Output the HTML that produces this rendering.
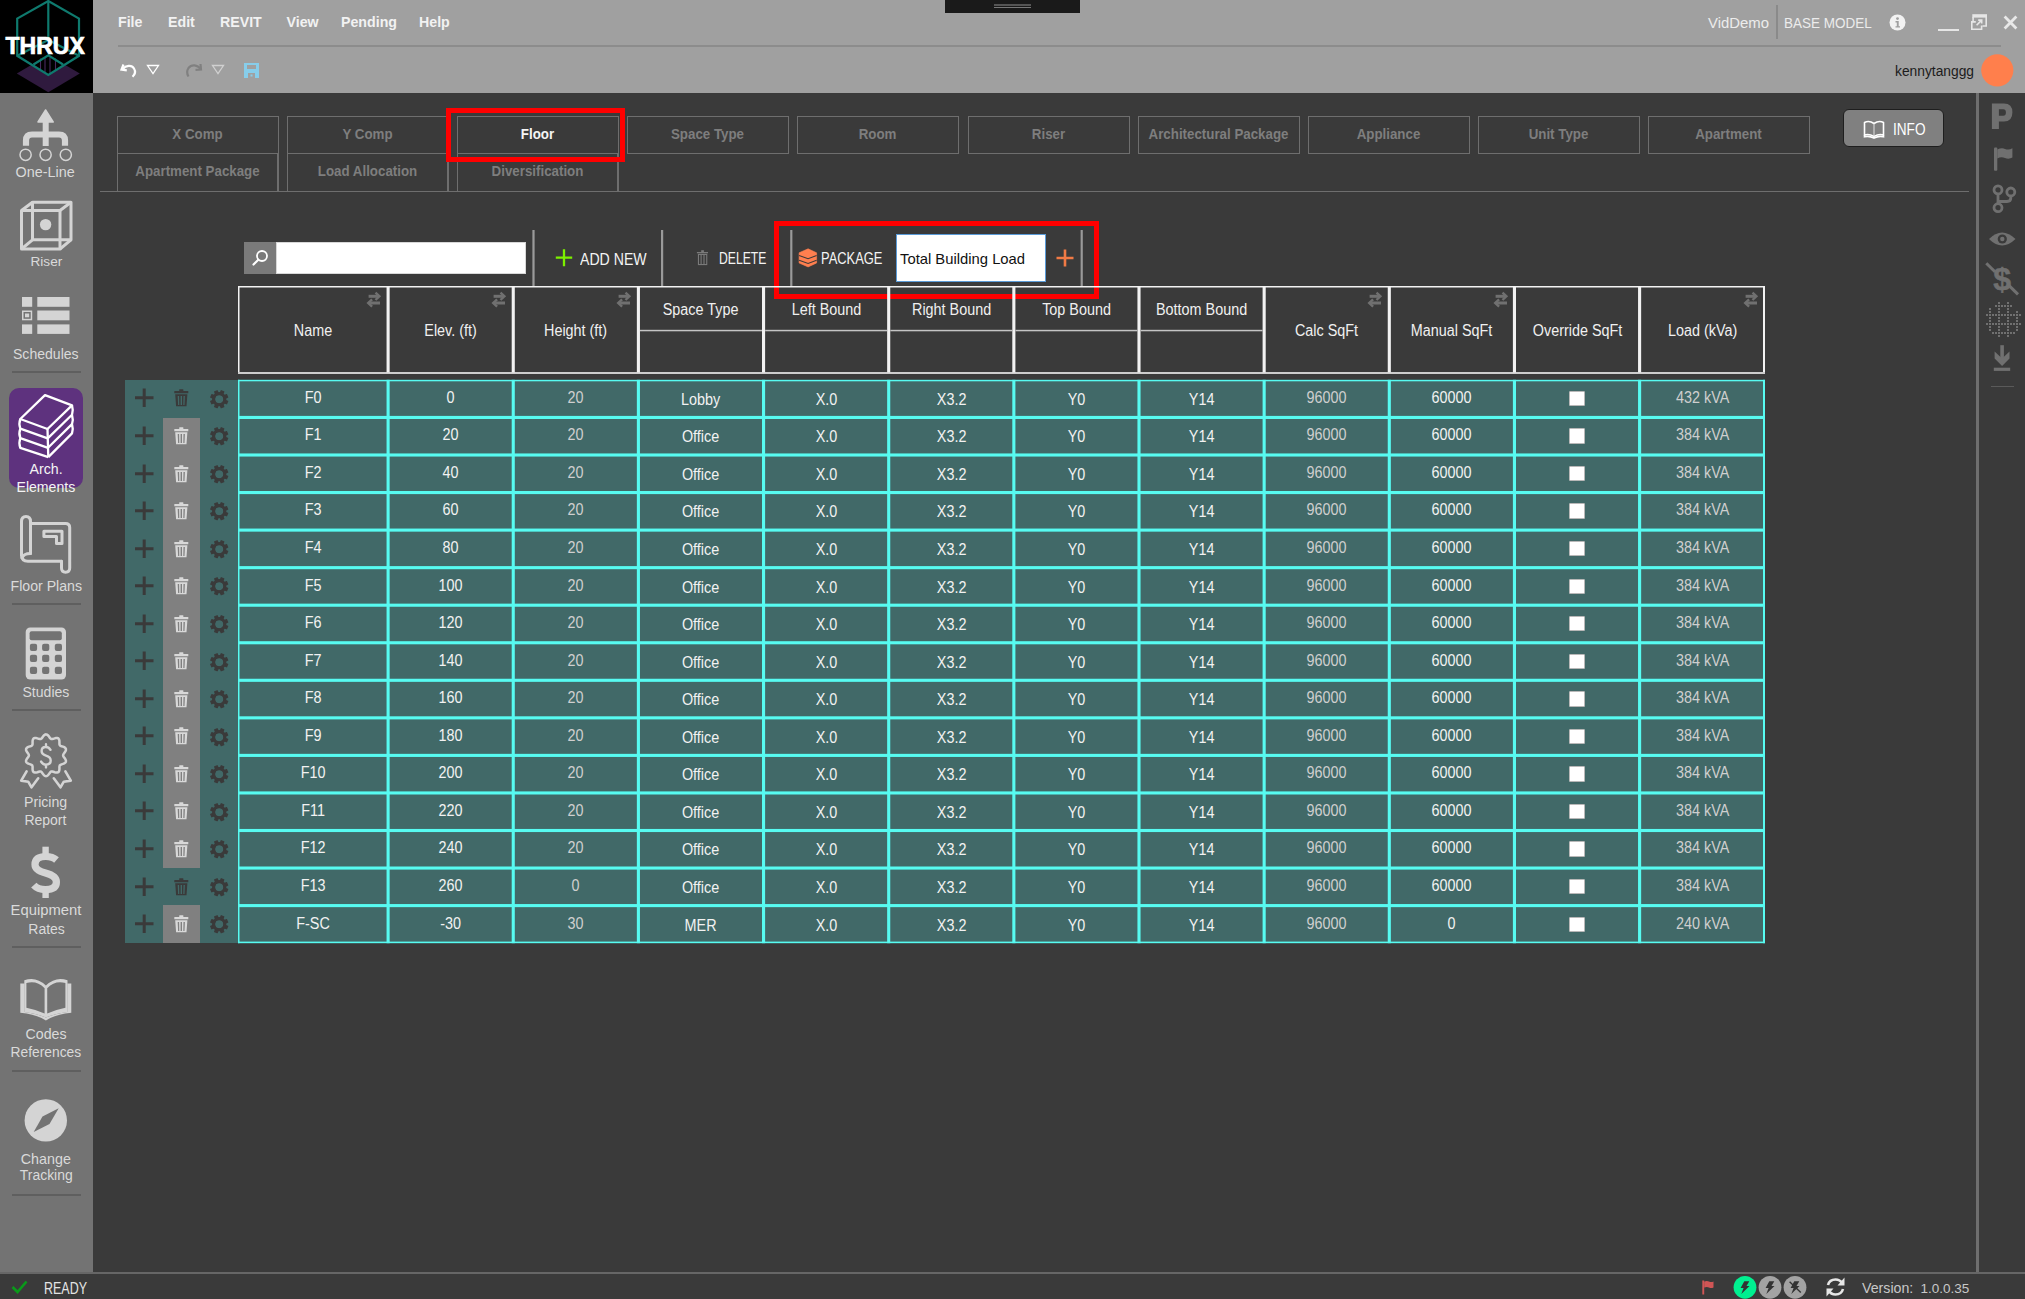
<!DOCTYPE html>
<html><head><meta charset="utf-8"><title>THRUX</title>
<style>
html,body{margin:0;padding:0;}
body{width:2025px;height:1299px;position:relative;overflow:hidden;background:#3a3a3a;font-family:"Liberation Sans",sans-serif;}
body>div,body>svg{position:absolute;}
</style></head><body>
<div style="left:93px;top:0px;width:1932px;height:93px;background:#a0a0a0;"></div>
<div style="left:0px;top:0px;width:93px;height:93px;background:#000;"></div>
<div style="left:0px;top:93px;width:93px;height:1179px;background:#737373;"></div>
<div style="left:0px;top:1272px;width:2025px;height:2px;background:#666666;"></div>
<div style="left:1976px;top:93px;width:2.5px;height:1179px;background:#6e6e6e;"></div>
<svg style="left:0px;top:0px;" width="93" height="93" viewBox="0 0 93 93"><polygon points="16.8,73.4 48.3,55 79.8,73.4 48.3,92.3" fill="#2f1a3e"/><polygon points="33.5,64.5 48.3,55.3 63,64.5 48.3,75" fill="#000"/><g stroke="#4a2a60" stroke-width="1.1"><line x1="40.5" y1="58.5" x2="40.5" y2="70"/><line x1="45" y1="57.5" x2="45" y2="73"/><line x1="50" y1="57.5" x2="50" y2="73"/><line x1="55.5" y1="58.5" x2="55.5" y2="70"/></g><g fill="none" stroke="#0f7a6e" stroke-width="2.2" stroke-linejoin="miter"><polygon points="48.3,1 79,18.6 79,55.8 48.3,75 17.2,55.8 17.2,18.6"/><polyline points="48.3,1 48.3,40"/><polyline points="17.2,55.8 48.3,40 79,55.8"/><polyline points="33.5,64.5 48.3,55.3 63,64.5"/></g></svg>
<div style="left:5.5px;top:34.93px;font-size:23.0px;line-height:23.0px;color:#ffffff;white-space:nowrap;font-weight:bold;-webkit-text-stroke:0.7px #fff;">THRUX</div>
<div style="left:118px;top:15.18px;font-size:14.2px;line-height:14.2px;color:#f2f2f2;white-space:nowrap;font-weight:bold;">File</div>
<div style="left:168px;top:15.18px;font-size:14.2px;line-height:14.2px;color:#f2f2f2;white-space:nowrap;font-weight:bold;">Edit</div>
<div style="left:220px;top:15.18px;font-size:14.2px;line-height:14.2px;color:#f2f2f2;white-space:nowrap;font-weight:bold;">REVIT</div>
<div style="left:286.5px;top:15.18px;font-size:14.2px;line-height:14.2px;color:#f2f2f2;white-space:nowrap;font-weight:bold;">View</div>
<div style="left:341px;top:15.18px;font-size:14.2px;line-height:14.2px;color:#f2f2f2;white-space:nowrap;font-weight:bold;">Pending</div>
<div style="left:419px;top:15.18px;font-size:14.2px;line-height:14.2px;color:#f2f2f2;white-space:nowrap;font-weight:bold;">Help</div>
<div style="left:118px;top:45px;width:1883px;height:2px;background:#8c8c8c;"></div>
<div style="left:945px;top:0px;width:135px;height:13px;background:#1a1a1a;"></div>
<div style="left:994px;top:4px;width:37px;height:2px;background:#555;"></div>
<div style="left:994px;top:7px;width:37px;height:1px;background:#777;"></div>
<svg style="left:118px;top:60px;" width="22" height="20" viewBox="0 0 22 20"><path d="M5.5,4.5 L3.5,9.5 L8.8,10.3" fill="none" stroke="#fff" stroke-width="2.2" stroke-linejoin="miter"/><path d="M4.5,9.2 C8,5.5 13.5,4.5 16,8.5 C17.8,11.5 17,14.5 14.5,16.8" fill="none" stroke="#fff" stroke-width="2.2"/></svg>
<svg style="left:146px;top:64px;" width="14" height="11" viewBox="0 0 14 11"><polygon points="1.5,1.5 12.5,1.5 7,9.5" fill="none" stroke="#fff" stroke-width="1.3"/></svg>
<svg style="left:184px;top:60px;" width="20" height="20" viewBox="0 0 20 20"><path d="M16.5,4 L17,9.5 L11.5,9.8" fill="none" stroke="#808080" stroke-width="2.2"/><path d="M16.5,9 C13.5,4.5 7.5,4 4.5,8 C2.5,11 3,14 4.5,16.5" fill="none" stroke="#808080" stroke-width="2.2"/></svg>
<svg style="left:211px;top:64px;" width="14" height="11" viewBox="0 0 14 11"><polygon points="1.5,1.5 12.5,1.5 7,9.5" fill="none" stroke="#d0d0d0" stroke-width="1.3"/></svg>
<svg style="left:243px;top:62px;" width="17" height="17" viewBox="0 0 17 17"><path d="M1,1 H16 V16 H1 Z M4,3 V7 H13 V3 Z M5,11 V16 H12 V11 Z" fill="#87cdea" fill-rule="evenodd"/><rect x="7.5" y="12.5" width="2" height="2" fill="#87cdea"/></svg>
<div style="left:1708px;top:15.98px;font-size:14.9px;line-height:14.9px;color:#ececec;white-space:nowrap;">VidDemo</div>
<div style="left:1776px;top:5px;width:1.5px;height:34px;background:#8a8a8a;"></div>
<div style="left:1784.3px;top:15.08px;font-size:15.5px;line-height:15.5px;color:#ececec;white-space:nowrap;transform:scaleX(0.8705);transform-origin:0 0;">BASE MODEL</div>
<svg style="left:1889px;top:14px;" width="17" height="17" viewBox="0 0 17 17"><circle cx="8.5" cy="8.5" r="8" fill="#f2f2f2"/><circle cx="8.5" cy="4.6" r="1.4" fill="#a0a0a0"/><path d="M6.5,7 H9.7 V12.2 H11 V13.6 H6.5 V12.2 H7.8 V8.4 H6.5 Z" fill="#a0a0a0"/></svg>
<div style="left:1938px;top:29px;width:20.5px;height:2.2px;background:#e6e6e6;"></div>
<svg style="left:1970px;top:13px;" width="19" height="18" viewBox="0 0 19 18"><g fill="none" stroke="#e6e6e6" stroke-width="1.6"><path d="M16.2,4 V13 H12.6 M3.1,4 V8.4 M5.8,8.9 H1.8 V16.2 H11.6 V12.6 M6.6,12.2 L11.4,7.4 M8.2,7.1 H11.7 V10.6"/></g><rect x="2.3" y="1.2" width="14.7" height="3.4" fill="#e6e6e6"/></svg>
<svg style="left:2002px;top:14px;" width="17" height="17" viewBox="0 0 17 17"><path d="M2.6,2.6 L14.4,14.4 M14.4,2.6 L2.6,14.4" stroke="#e8e8e8" stroke-width="2.8"/></svg>
<div style="left:1895px;top:65.12px;font-size:13.8px;line-height:13.8px;color:#1c1c1c;white-space:nowrap;">kennytanggg</div>
<svg style="left:1981px;top:54px;" width="33" height="33" viewBox="0 0 33 33"><circle cx="16.3" cy="16.3" r="16.1" fill="#ff7f4c"/></svg>
<svg style="left:15px;top:105px;" width="62" height="60" viewBox="0 0 62 60"><path d="M23,17 L30.6,5 L38.2,17 Z" fill="#d4d4d4" stroke="#d4d4d4" stroke-width="1.5" stroke-linejoin="round"/><rect x="27.7" y="15" width="6" height="26" fill="#d4d4d4"/><path d="M11,40.8 V35.5 Q11,29.5 17,29.5 H44 Q50,29.5 50,35.5 V40.8" fill="none" stroke="#d4d4d4" stroke-width="6.2"/><g fill="none" stroke="#d4d4d4" stroke-width="1.5"><circle cx="10.6" cy="49.8" r="5.6"/><circle cx="30.6" cy="49.8" r="5.6"/><circle cx="50.8" cy="49.8" r="5.6"/></g></svg>
<div style="left:15.5px;top:165.41px;font-size:14.4px;line-height:14.4px;color:#dadada;white-space:nowrap;">One-Line</div>
<svg style="left:15px;top:195px;" width="62" height="60" viewBox="0 0 62 60"><g fill="none" stroke="#d4d4d4" stroke-width="3" stroke-linejoin="round"><rect x="6.5" y="15.5" width="38.5" height="38.5"/><rect x="17.5" y="7.2" width="38.5" height="37.6"/><line x1="6.5" y1="15.5" x2="17.5" y2="7.2"/><line x1="45" y1="15.5" x2="56" y2="7.2"/><line x1="6.5" y1="54" x2="17.5" y2="44.8"/><line x1="45" y1="54" x2="56" y2="44.8"/></g><circle cx="30.6" cy="29.6" r="5.7" fill="#d4d4d4"/></svg>
<div style="left:30.5px;top:255.08px;font-size:13.6px;line-height:13.6px;color:#dadada;white-space:nowrap;">Riser</div>
<svg style="left:15px;top:290px;" width="62" height="50" viewBox="0 0 62 50"><g fill="#d4d4d4"><rect x="7" y="7" width="10.2" height="9.8"/><rect x="7" y="34.4" width="10.2" height="9.5"/><rect x="22.3" y="7" width="32.2" height="9.8"/><rect x="22.3" y="20.5" width="32.2" height="9.8"/><rect x="22.3" y="34.4" width="32.2" height="9.5"/></g><rect x="7.75" y="21.25" width="8.7" height="8.3" fill="none" stroke="#d4d4d4" stroke-width="1.5"/><rect x="10" y="23.5" width="4.2" height="3.8" fill="#d4d4d4"/></svg>
<div style="left:13px;top:346.90px;font-size:14.05px;line-height:14.05px;color:#dadada;white-space:nowrap;">Schedules</div>
<div style="left:11.5px;top:371px;width:69px;height:1.5px;background:#5f5f5f;"></div>
<div style="left:9px;top:388px;width:74px;height:100px;background:#5e327e;border-radius:10px;"></div>
<svg style="left:15px;top:390px;" width="62" height="72" viewBox="0 0 62 72"><g fill="none" stroke="#ffffff" stroke-width="2.3" stroke-linejoin="round"><path d="M5.3,29 L30,5.2 L57,15.4 L32.5,39 Z"/><path d="M5.3,29 Q3.5,34 5.3,38.6 L32.7,48.4 M5.3,38.6 Q3.5,43.5 5.3,48.2 L33,57.8 M5.3,48.2 Q3.5,53 5.3,57.8 L33.3,67.1"/><path d="M32.5,39 L33.3,67.1"/><path d="M57,15.4 Q58.5,20 57,24.8 L32.7,48.4 M57,24.8 Q58.5,29.5 57,34.1 L33,57.8 M57,34.1 Q58.5,39 57,43.4 L33.3,67.1"/></g></svg>
<div style="left:29.5px;top:461.98px;font-size:14.2px;line-height:14.2px;color:#f4f4f4;white-space:nowrap;">Arch.</div>
<div style="left:16.5px;top:479.86px;font-size:14.1px;line-height:14.1px;color:#f4f4f4;white-space:nowrap;">Elements</div>
<svg style="left:15px;top:510px;" width="62" height="70" viewBox="0 0 62 70"><g fill="none" stroke="#d4d4d4" stroke-width="3" stroke-linejoin="round" stroke-linecap="round"><path d="M6.5,45 V11.5 Q6.5,6.5 11,6.5 Q15.5,6.5 15.5,11.5 V43.5"/><path d="M6.5,45 Q6.5,51.2 13,51.2 H46.5"/><path d="M15.5,43.5 Q8.5,43.5 7,48"/><path d="M15.5,13.5 H50.5 Q54.7,13.5 54.7,17.5 V58 Q54.7,62.2 50.6,62.2 Q46.5,62.2 46.5,58 V51.2"/><path d="M28.9,21.2 H47 V33.5 H41.5 V26.5 H28.9 Z"/></g></svg>
<div style="left:10.5px;top:579.22px;font-size:14.15px;line-height:14.15px;color:#dadada;white-space:nowrap;">Floor Plans</div>
<div style="left:11.5px;top:603px;width:69px;height:1.5px;background:#5f5f5f;"></div>
<svg style="left:15px;top:620px;" width="62" height="65" viewBox="0 0 62 65"><rect x="10.7" y="7.4" width="40.3" height="52.2" rx="4.5" fill="#d4d4d4"/><rect x="14.6" y="11.3" width="32.2" height="9" rx="2" fill="#737373"/><rect x="14.9" y="23.8" width="7.2" height="7.2" rx="2" fill="#737373"/><rect x="27.1" y="23.8" width="7.2" height="7.2" rx="2" fill="#737373"/><rect x="39.8" y="23.8" width="7.2" height="7.2" rx="2" fill="#737373"/><rect x="14.9" y="34.8" width="7.2" height="7.2" rx="2" fill="#737373"/><rect x="27.1" y="34.8" width="7.2" height="7.2" rx="2" fill="#737373"/><rect x="39.8" y="34.8" width="7.2" height="7.2" rx="2" fill="#737373"/><rect x="14.9" y="46.7" width="7.2" height="7.2" rx="2" fill="#737373"/><rect x="27.1" y="46.7" width="7.2" height="7.2" rx="2" fill="#737373"/><rect x="39.8" y="46.7" width="7.2" height="7.2" rx="2" fill="#737373"/></svg>
<div style="left:22.5px;top:684.60px;font-size:14.05px;line-height:14.05px;color:#dadada;white-space:nowrap;">Studies</div>
<div style="left:11.5px;top:709px;width:69px;height:1.5px;background:#5f5f5f;"></div>
<svg style="left:15px;top:720px;" width="62" height="75" viewBox="0 0 62 75"><polygon points="31.00,14.40 32.08,14.68 33.09,15.46 33.97,16.53 34.75,17.64 35.49,18.54 36.28,19.04 37.22,19.10 38.34,18.81 39.63,18.37 40.97,18.02 42.24,17.99 43.28,18.39 43.99,19.26 44.35,20.47 44.44,21.86 44.41,23.22 44.49,24.38 44.83,25.25 45.55,25.85 46.63,26.27 47.93,26.67 49.23,27.19 50.27,27.90 50.88,28.84 50.94,29.96 50.51,31.15 49.77,32.33 48.95,33.41 48.33,34.39 48.10,35.30 48.33,36.21 48.95,37.19 49.77,38.27 50.51,39.45 50.94,40.64 50.88,41.76 50.27,42.70 49.23,43.41 47.93,43.93 46.63,44.32 45.55,44.75 44.83,45.35 44.49,46.22 44.41,47.38 44.44,48.74 44.35,50.13 43.99,51.34 43.28,52.21 42.24,52.61 40.97,52.58 39.63,52.23 38.34,51.79 37.22,51.50 36.28,51.56 35.49,52.06 34.75,52.96 33.97,54.07 33.09,55.14 32.08,55.92 31.00,56.20 29.92,55.92 28.91,55.14 28.03,54.07 27.25,52.96 26.51,52.06 25.72,51.56 24.78,51.50 23.66,51.79 22.37,52.23 21.03,52.58 19.76,52.61 18.72,52.21 18.01,51.34 17.65,50.13 17.56,48.74 17.59,47.38 17.51,46.22 17.17,45.35 16.45,44.75 15.37,44.33 14.07,43.93 12.77,43.41 11.73,42.70 11.12,41.76 11.06,40.64 11.49,39.45 12.23,38.27 13.05,37.19 13.67,36.21 13.90,35.30 13.67,34.39 13.05,33.41 12.23,32.33 11.49,31.15 11.06,29.96 11.12,28.84 11.73,27.90 12.77,27.19 14.07,26.67 15.37,26.27 16.45,25.85 17.17,25.25 17.51,24.38 17.59,23.22 17.56,21.86 17.65,20.47 18.01,19.26 18.72,18.39 19.76,17.99 21.03,18.02 22.37,18.37 23.66,18.81 24.78,19.10 25.72,19.04 26.51,18.54 27.25,17.64 28.03,16.53 28.91,15.46 29.92,14.68" fill="none" stroke="#d4d4d4" stroke-width="2.5"/><path d="M11.6,51.3 L6.2,60.6 L13.2,61.7 L16.5,67.3 L23.2,58.3 M50.4,51.3 L55.8,60.6 L48.8,61.7 L45.5,67.3 L38.8,58.3" fill="none" stroke="#d4d4d4" stroke-width="2.6" stroke-linejoin="round" stroke-linecap="round"/><path d="M35.5,29.8 Q33.8,27 30.8,27 Q26.6,27 26.6,31 Q26.6,34.3 31,35.6 Q35.7,37 35.7,40.6 Q35.7,44.6 31,44.6 Q27.8,44.6 26.1,41.6 M31,24.2 V27 M31,44.6 V47.4" fill="none" stroke="#d4d4d4" stroke-width="2.4" stroke-linecap="round"/></svg>
<div style="left:24px;top:794.82px;font-size:14.15px;line-height:14.15px;color:#dadada;white-space:nowrap;">Pricing</div>
<div style="left:24.4px;top:812.65px;font-size:14.0px;line-height:14.0px;color:#dadada;white-space:nowrap;">Report</div>
<svg style="left:25px;top:840px;" width="42" height="64" viewBox="0 0 42 64"><path d="M31.5,20 Q27.5,16.5 20.8,16.5 Q10,16.5 10,24.5 Q10,30.3 20.5,33 Q31.4,35.8 31.4,42 Q31.4,49.6 20.5,49.6 Q12.8,49.6 8.8,45.2" fill="none" stroke="#d4d4d4" stroke-width="7.2"/><rect x="17.4" y="6.7" width="6.4" height="8" fill="#d4d4d4"/><rect x="17.4" y="51" width="6.4" height="7" fill="#d4d4d4"/></svg>
<div style="left:10.6px;top:903.17px;font-size:14.8px;line-height:14.8px;color:#dadada;white-space:nowrap;">Equipment</div>
<div style="left:28.3px;top:921.65px;font-size:14.0px;line-height:14.0px;color:#dadada;white-space:nowrap;">Rates</div>
<div style="left:11.5px;top:946px;width:69px;height:1.5px;background:#5f5f5f;"></div>
<svg style="left:15px;top:972px;" width="62" height="52" viewBox="0 0 62 52"><path d="M5.3,11.5 H9.5 V40 Q22,41.5 30.9,45.5 Q39.8,41.5 52.3,40 V11.5 H56.3 V40.8 Q40,42.5 30.9,48.4 Q21.8,42.5 5.3,40.8 Z" fill="#d4d4d4"/><path d="M9.3,8.3 Q21,4 30.9,13.5 Q40.8,4 52.5,8.3 V40.2 Q39.8,41.5 30.9,45.5 Q22,41.5 9.3,40.2 Z M11.4,11.1 Q21.5,8 29.6,16.2 V41.6 Q21,37.5 11.4,35.7 Z M50.4,11.1 Q40.3,8 32.2,16.2 V41.6 Q40.8,37.5 50.4,35.7 Z" fill="#d4d4d4" fill-rule="evenodd"/></svg>
<div style="left:25.6px;top:1027.48px;font-size:14.2px;line-height:14.2px;color:#dadada;white-space:nowrap;">Codes</div>
<div style="left:10.6px;top:1045.72px;font-size:13.8px;line-height:13.8px;color:#dadada;white-space:nowrap;">References</div>
<div style="left:11.5px;top:1070px;width:69px;height:1.5px;background:#5f5f5f;"></div>
<svg style="left:15px;top:1090px;" width="62" height="60" viewBox="0 0 62 60"><circle cx="30.8" cy="30.4" r="21.2" fill="#d4d4d4"/><path d="M18.7,42 L27.5,26.5 L43.7,18.3 L34.5,34 Z" fill="#737373"/></svg>
<div style="left:20.8px;top:1151.59px;font-size:14.3px;line-height:14.3px;color:#dadada;white-space:nowrap;">Change</div>
<div style="left:19.8px;top:1169.19px;font-size:13.95px;line-height:13.95px;color:#dadada;white-space:nowrap;">Tracking</div>
<div style="left:11.5px;top:1194px;width:69px;height:1.5px;background:#5f5f5f;"></div>
<svg style="left:1988px;top:100px;" width="28" height="32" viewBox="0 0 28 32"><path d="M3.9,3.6 H16 Q24.4,3.6 24.4,12.5 Q24.4,21.5 16,21.5 H10.9 V28.9 H3.9 Z M10.9,9.3 V15.8 H15.3 Q17.9,15.8 17.9,12.5 Q17.9,9.3 15.3,9.3 Z" fill="#707070" fill-rule="evenodd"/></svg>
<svg style="left:1990px;top:145px;" width="26" height="28" viewBox="0 0 26 28"><rect x="4" y="2.4" width="3.3" height="23.4" rx="1" fill="#707070"/><path d="M7.3,4.5 Q12,2.5 15,4 Q19,5.5 22.4,3.2 V12.5 Q19,14.5 15,13 Q11,11.5 7.3,13.5 Z" fill="#707070"/></svg>
<svg style="left:1988px;top:183px;" width="30" height="32" viewBox="0 0 30 32"><g fill="none" stroke="#707070" stroke-width="2.8"><circle cx="10" cy="6.9" r="4"/><circle cx="22.8" cy="9" r="4"/><circle cx="10" cy="24.7" r="4"/><path d="M10,10.9 V20.7 M22.8,13 V15 Q22.8,18.5 19,18.5 H10"/></g></svg>
<svg style="left:1988px;top:229px;" width="29" height="20" viewBox="0 0 29 20"><path d="M1,10 Q14,-3 27.5,10 Q14,23 1,10 Z" fill="#707070"/><circle cx="14.3" cy="10" r="4.6" fill="#3a3a3a"/><circle cx="14.3" cy="10" r="2.2" fill="#707070"/></svg>
<svg style="left:1984px;top:260px;" width="38" height="38" viewBox="0 0 38 38"><line x1="2.3" y1="3.3" x2="34" y2="34.4" stroke="#707070" stroke-width="3"/><line x1="11" y1="11.8" x2="25" y2="25.5" stroke="#3a3a3a" stroke-width="6"/><text x="18.1" y="29.6" font-family="Liberation Sans" font-weight="bold" font-size="32" fill="#707070" stroke="#707070" stroke-width="0.5" text-anchor="middle">$</text></svg>
<svg style="left:1985px;top:301px;" width="37" height="37" viewBox="0 0 37 37"><g fill="#707070"><rect x="13.0" y="1.0" width="2" height="2"/><rect x="22.0" y="1.0" width="2" height="2"/><rect x="10.0" y="4.0" width="2" height="2"/><rect x="13.0" y="4.0" width="2" height="2"/><rect x="16.0" y="4.0" width="2" height="2"/><rect x="19.0" y="4.0" width="2" height="2"/><rect x="22.0" y="4.0" width="2" height="2"/><rect x="25.0" y="4.0" width="2" height="2"/><rect x="4.0" y="7.0" width="2" height="2"/><rect x="13.0" y="7.0" width="2" height="2"/><rect x="22.0" y="7.0" width="2" height="2"/><rect x="4.0" y="10.0" width="2" height="2"/><rect x="13.0" y="10.0" width="2" height="2"/><rect x="22.0" y="10.0" width="2" height="2"/><rect x="31.0" y="10.0" width="2" height="2"/><rect x="1.0" y="13.0" width="2" height="2"/><rect x="4.0" y="13.0" width="2" height="2"/><rect x="7.0" y="13.0" width="2" height="2"/><rect x="10.0" y="13.0" width="2" height="2"/><rect x="13.0" y="13.0" width="2" height="2"/><rect x="16.0" y="13.0" width="2" height="2"/><rect x="19.0" y="13.0" width="2" height="2"/><rect x="22.0" y="13.0" width="2" height="2"/><rect x="25.0" y="13.0" width="2" height="2"/><rect x="28.0" y="13.0" width="2" height="2"/><rect x="31.0" y="13.0" width="2" height="2"/><rect x="34.0" y="13.0" width="2" height="2"/><rect x="4.0" y="16.0" width="2" height="2"/><rect x="13.0" y="16.0" width="2" height="2"/><rect x="22.0" y="16.0" width="2" height="2"/><rect x="31.0" y="16.0" width="2" height="2"/><rect x="4.0" y="19.0" width="2" height="2"/><rect x="13.0" y="19.0" width="2" height="2"/><rect x="22.0" y="19.0" width="2" height="2"/><rect x="31.0" y="19.0" width="2" height="2"/><rect x="1.0" y="22.0" width="2" height="2"/><rect x="4.0" y="22.0" width="2" height="2"/><rect x="7.0" y="22.0" width="2" height="2"/><rect x="10.0" y="22.0" width="2" height="2"/><rect x="13.0" y="22.0" width="2" height="2"/><rect x="16.0" y="22.0" width="2" height="2"/><rect x="19.0" y="22.0" width="2" height="2"/><rect x="22.0" y="22.0" width="2" height="2"/><rect x="25.0" y="22.0" width="2" height="2"/><rect x="28.0" y="22.0" width="2" height="2"/><rect x="31.0" y="22.0" width="2" height="2"/><rect x="34.0" y="22.0" width="2" height="2"/><rect x="4.0" y="25.0" width="2" height="2"/><rect x="13.0" y="25.0" width="2" height="2"/><rect x="22.0" y="25.0" width="2" height="2"/><rect x="31.0" y="25.0" width="2" height="2"/><rect x="4.0" y="28.0" width="2" height="2"/><rect x="13.0" y="28.0" width="2" height="2"/><rect x="22.0" y="28.0" width="2" height="2"/><rect x="31.0" y="28.0" width="2" height="2"/><rect x="7.0" y="31.0" width="2" height="2"/><rect x="10.0" y="31.0" width="2" height="2"/><rect x="13.0" y="31.0" width="2" height="2"/><rect x="16.0" y="31.0" width="2" height="2"/><rect x="19.0" y="31.0" width="2" height="2"/><rect x="22.0" y="31.0" width="2" height="2"/><rect x="25.0" y="31.0" width="2" height="2"/><rect x="28.0" y="31.0" width="2" height="2"/><rect x="13.0" y="34.0" width="2" height="2"/><rect x="22.0" y="34.0" width="2" height="2"/></g></svg>
<svg style="left:1992px;top:344px;" width="20" height="30" viewBox="0 0 20 30"><rect x="8.3" y="1.2" width="3.6" height="14" fill="#707070"/><path d="M2.6,7.5 L10.1,14.5 L17.5,7.5 V14.5 L10.1,22 L2.6,14.5 Z" fill="#707070"/><rect x="1.8" y="23.7" width="16.4" height="3.2" fill="#707070"/></svg>
<div style="left:1991px;top:385.5px;width:22.5px;height:1.5px;background:#5a5a5a;"></div>
<div style="left:116.5px;top:116px;width:162px;height:38px;border:1.5px solid #6e6e6e;box-sizing:border-box;"></div>
<div style="left:117px;top:127.27px;font-size:14.8px;line-height:14.8px;color:#7e7e7e;white-space:nowrap;width:161px;text-align:center;font-weight:bold;transform:scaleX(0.9);">X Comp</div>
<div style="left:286.5px;top:116px;width:162px;height:38px;border:1.5px solid #6e6e6e;box-sizing:border-box;"></div>
<div style="left:287px;top:127.27px;font-size:14.8px;line-height:14.8px;color:#7e7e7e;white-space:nowrap;width:161px;text-align:center;font-weight:bold;transform:scaleX(0.9);">Y Comp</div>
<div style="left:456.5px;top:116px;width:162px;height:38px;border:1.5px solid #6e6e6e;box-sizing:border-box;"></div>
<div style="left:457px;top:127.27px;font-size:14.8px;line-height:14.8px;color:#f4f4f4;white-space:nowrap;width:161px;text-align:center;font-weight:bold;transform:scaleX(0.9);">Floor</div>
<div style="left:626.5px;top:116px;width:162px;height:38px;border:1.5px solid #6e6e6e;box-sizing:border-box;"></div>
<div style="left:627px;top:127.27px;font-size:14.8px;line-height:14.8px;color:#7e7e7e;white-space:nowrap;width:161px;text-align:center;font-weight:bold;transform:scaleX(0.9);">Space Type</div>
<div style="left:796.5px;top:116px;width:162px;height:38px;border:1.5px solid #6e6e6e;box-sizing:border-box;"></div>
<div style="left:797px;top:127.27px;font-size:14.8px;line-height:14.8px;color:#7e7e7e;white-space:nowrap;width:161px;text-align:center;font-weight:bold;transform:scaleX(0.9);">Room</div>
<div style="left:967.5px;top:116px;width:162px;height:38px;border:1.5px solid #6e6e6e;box-sizing:border-box;"></div>
<div style="left:968px;top:127.27px;font-size:14.8px;line-height:14.8px;color:#7e7e7e;white-space:nowrap;width:161px;text-align:center;font-weight:bold;transform:scaleX(0.9);">Riser</div>
<div style="left:1137.5px;top:116px;width:162px;height:38px;border:1.5px solid #6e6e6e;box-sizing:border-box;"></div>
<div style="left:1138px;top:127.27px;font-size:14.8px;line-height:14.8px;color:#7e7e7e;white-space:nowrap;width:161px;text-align:center;font-weight:bold;transform:scaleX(0.9);">Architectural Package</div>
<div style="left:1307.5px;top:116px;width:162px;height:38px;border:1.5px solid #6e6e6e;box-sizing:border-box;"></div>
<div style="left:1308px;top:127.27px;font-size:14.8px;line-height:14.8px;color:#7e7e7e;white-space:nowrap;width:161px;text-align:center;font-weight:bold;transform:scaleX(0.9);">Appliance</div>
<div style="left:1477.5px;top:116px;width:162px;height:38px;border:1.5px solid #6e6e6e;box-sizing:border-box;"></div>
<div style="left:1478px;top:127.27px;font-size:14.8px;line-height:14.8px;color:#7e7e7e;white-space:nowrap;width:161px;text-align:center;font-weight:bold;transform:scaleX(0.9);">Unit Type</div>
<div style="left:1647.5px;top:116px;width:162px;height:38px;border:1.5px solid #6e6e6e;box-sizing:border-box;"></div>
<div style="left:1648px;top:127.27px;font-size:14.8px;line-height:14.8px;color:#7e7e7e;white-space:nowrap;width:161px;text-align:center;font-weight:bold;transform:scaleX(0.9);">Apartment</div>
<div style="left:116.5px;top:153px;width:1.5px;height:39px;background:#6e6e6e;"></div>
<div style="left:277px;top:153px;width:1.5px;height:39px;background:#6e6e6e;"></div>
<div style="left:117px;top:164.27px;font-size:14.8px;line-height:14.8px;color:#7e7e7e;white-space:nowrap;width:161px;text-align:center;font-weight:bold;transform:scaleX(0.9);">Apartment Package</div>
<div style="left:286.5px;top:153px;width:1.5px;height:39px;background:#6e6e6e;"></div>
<div style="left:447px;top:153px;width:1.5px;height:39px;background:#6e6e6e;"></div>
<div style="left:287px;top:164.27px;font-size:14.8px;line-height:14.8px;color:#7e7e7e;white-space:nowrap;width:161px;text-align:center;font-weight:bold;transform:scaleX(0.9);">Load Allocation</div>
<div style="left:456.5px;top:153px;width:1.5px;height:39px;background:#6e6e6e;"></div>
<div style="left:617px;top:153px;width:1.5px;height:39px;background:#6e6e6e;"></div>
<div style="left:457px;top:164.27px;font-size:14.8px;line-height:14.8px;color:#7e7e7e;white-space:nowrap;width:161px;text-align:center;font-weight:bold;transform:scaleX(0.9);">Diversification</div>
<div style="left:100px;top:190.8px;width:1869px;height:1.4px;background:#6e6e6e;"></div>
<div style="left:1843px;top:109px;width:100.5px;height:38px;background:#808080;border:1px solid #1e1e1e;border-radius:6px;box-sizing:border-box;"></div>
<svg style="left:1862px;top:119px;" width="24" height="21" viewBox="0 0 24 21"><path d="M2.5,3.5 Q7,1 12,4.5 Q17,1 21.5,3.5 V16 Q17,14.5 12,17.5 Q7,14.5 2.5,16 Z" fill="none" stroke="#fff" stroke-width="1.6" stroke-linejoin="round"/><path d="M12,4.5 V17.5" stroke="#e0e0e0" stroke-width="1"/><path d="M2.5,16 V17.8 Q7,16.5 12,19 Q17,16.5 21.5,17.8 V16" fill="none" stroke="#fff" stroke-width="1.6"/></svg>
<div style="left:1893.2px;top:122.45px;font-size:16px;line-height:16px;color:#ffffff;white-space:nowrap;transform:scaleX(0.8499);transform-origin:0 0;">INFO</div>
<div style="left:244px;top:242px;width:32px;height:31.5px;background:#7a7a7a;"></div>
<svg style="left:244px;top:242px;" width="32" height="32" viewBox="0 0 32 32"><circle cx="18" cy="14" r="5" fill="none" stroke="#fff" stroke-width="1.8"/><line x1="14.3" y1="17.7" x2="9.5" y2="22.5" stroke="#fff" stroke-width="2.2" stroke-linecap="round"/></svg>
<div style="left:276px;top:242px;width:250px;height:31.5px;background:#ffffff;border:1px solid #d8d8d8;box-sizing:border-box;"></div>
<svg style="left:520px;top:225px;" width="580" height="65" viewBox="0 0 580 65"><rect x="12.399999999999977" y="5" width="2.2" height="57" fill="#9a9a9a"/><rect x="141" y="5" width="2.2" height="57" fill="#9a9a9a"/><rect x="270.20000000000005" y="5" width="2.2" height="57" fill="#9a9a9a"/><rect x="560.5999999999999" y="5" width="2.2" height="57" fill="#9a9a9a"/></svg>
<svg style="left:553px;top:247px;" width="22" height="22" viewBox="0 0 22 22"><path d="M11,2.2 V19.2 M2.8,10.7 H19.2" stroke="#7cf000" stroke-width="2.3"/></svg>
<div style="left:579.8px;top:251.65px;font-size:16px;line-height:16px;color:#f4f4f4;white-space:nowrap;transform:scaleX(0.8823);transform-origin:0 0;">ADD NEW</div>
<svg style="left:694px;top:248px;" width="16" height="20" viewBox="0 0 16 20"><g fill="#7a7a7a"><rect x="7.2" y="2.2" width="2.7" height="1.9"/><rect x="2.9" y="4" width="11.1" height="1.3"/></g><g fill="none" stroke="#7a7a7a" stroke-width="1.1"><rect x="4.45" y="6.45" width="8.3" height="10.1"/><path d="M7.1,7 V16 M10,7 V16"/></g></svg>
<div style="left:718.8px;top:251.05px;font-size:16px;line-height:16px;color:#f4f4f4;white-space:nowrap;transform:scaleX(0.7616);transform-origin:0 0;">DELETE</div>
<svg style="left:797px;top:247px;" width="22" height="22" viewBox="0 0 22 22"><path d="M11.1,1.8 L19.6,5.8 V16 L11.1,19.9 L2.1,16 V5.8 Z" fill="#ff7f4f" stroke="#ff7f4f" stroke-width="0.6" stroke-linejoin="round"/><path d="M2.1,8.6 L11.1,11.7 L19.6,8.6 M2.1,13.3 L11.1,16.4 L19.6,13.3" fill="none" stroke="#3a3a3a" stroke-width="1.1"/></svg>
<div style="left:821.3px;top:251.05px;font-size:16px;line-height:16px;color:#f4f4f4;white-space:nowrap;transform:scaleX(0.8062);transform-origin:0 0;">PACKAGE</div>
<div style="left:895.5px;top:233.5px;width:150.5px;height:48.5px;background:#ffffff;border:1px solid #5a9bd8;box-sizing:border-box;"></div>
<div style="left:900px;top:252.17px;font-size:14.8px;line-height:14.8px;color:#111111;white-space:nowrap;">Total Building Load</div>
<svg style="left:1055px;top:248px;" width="20" height="20" viewBox="0 0 20 20"><path d="M10,1.5 V18.5 M1.5,10 H18.5" stroke="#f07a45" stroke-width="2.6"/></svg>
<div style="left:774px;top:221px;width:325px;height:78px;border:5.3px solid #ff0000;box-sizing:border-box;"></div>
<div style="left:446px;top:108.4px;width:179px;height:54px;border:5.2px solid #ff0000;box-sizing:border-box;"></div>
<svg style="left:0px;top:0px;" width="1800" height="400" viewBox="0 0 1800 400"><rect x="238" y="286" width="1527" height="1.5" fill="#f2f2f2"/><rect x="238" y="286" width="1.5" height="88" fill="#f2f2f2"/><rect x="1763" y="286" width="2" height="88" fill="#f2f2f2"/><rect x="238" y="372" width="1527" height="2" fill="#cdcdcd"/><rect x="386.55" y="286" width="3.1" height="86.5" fill="#f2f2f2"/><rect x="511.70" y="286" width="3.1" height="86.5" fill="#f2f2f2"/><rect x="636.85" y="286" width="3.1" height="86.5" fill="#f2f2f2"/><rect x="762.00" y="286" width="3.1" height="86.5" fill="#f2f2f2"/><rect x="887.15" y="286" width="3.1" height="86.5" fill="#f2f2f2"/><rect x="1012.30" y="286" width="3.1" height="86.5" fill="#f2f2f2"/><rect x="1137.45" y="286" width="3.1" height="86.5" fill="#f2f2f2"/><rect x="1262.60" y="286" width="3.1" height="86.5" fill="#f2f2f2"/><rect x="1387.75" y="286" width="3.1" height="86.5" fill="#f2f2f2"/><rect x="1512.90" y="286" width="3.1" height="86.5" fill="#f2f2f2"/><rect x="1638.05" y="286" width="3.1" height="86.5" fill="#f2f2f2"/><rect x="640.00" y="329.8" width="121.95" height="1.5" fill="#c4c4c4"/><rect x="765.15" y="329.8" width="121.95" height="1.5" fill="#c4c4c4"/><rect x="890.30" y="329.8" width="121.95" height="1.5" fill="#c4c4c4"/><rect x="1015.45" y="329.8" width="121.95" height="1.5" fill="#c4c4c4"/><rect x="1140.60" y="329.8" width="121.95" height="1.5" fill="#c4c4c4"/></svg>
<div style="left:238px;top:323.32px;font-size:15.8px;line-height:15.8px;color:#f0f0f0;white-space:nowrap;width:150.10000000000002px;text-align:center;transform:scaleX(0.91);">Name</div>
<svg style="left:366.1px;top:290px;" width="18" height="19" viewBox="0 0 18 19"><g fill="none" stroke="#707070" stroke-linejoin="miter"><path d="M2.6,6.3 H13" stroke-width="3"/><path d="M9.5,2.6 L13.4,6.3 L9.5,10" stroke-width="2.4"/><path d="M14,13 H3" stroke-width="3"/><path d="M6.1,9.3 L2.2,13 L6.1,16.7" stroke-width="2.4"/></g></svg>
<div style="left:388.1px;top:323.32px;font-size:15.8px;line-height:15.8px;color:#f0f0f0;white-space:nowrap;width:125.10000000000002px;text-align:center;transform:scaleX(0.91);">Elev. (ft)</div>
<svg style="left:491.20000000000005px;top:290px;" width="18" height="19" viewBox="0 0 18 19"><g fill="none" stroke="#707070" stroke-linejoin="miter"><path d="M2.6,6.3 H13" stroke-width="3"/><path d="M9.5,2.6 L13.4,6.3 L9.5,10" stroke-width="2.4"/><path d="M14,13 H3" stroke-width="3"/><path d="M6.1,9.3 L2.2,13 L6.1,16.7" stroke-width="2.4"/></g></svg>
<div style="left:513.2px;top:323.32px;font-size:15.8px;line-height:15.8px;color:#f0f0f0;white-space:nowrap;width:125.19999999999993px;text-align:center;transform:scaleX(0.91);">Height (ft)</div>
<svg style="left:616.4px;top:290px;" width="18" height="19" viewBox="0 0 18 19"><g fill="none" stroke="#707070" stroke-linejoin="miter"><path d="M2.6,6.3 H13" stroke-width="3"/><path d="M9.5,2.6 L13.4,6.3 L9.5,10" stroke-width="2.4"/><path d="M14,13 H3" stroke-width="3"/><path d="M6.1,9.3 L2.2,13 L6.1,16.7" stroke-width="2.4"/></g></svg>
<div style="left:638.4px;top:301.92px;font-size:15.8px;line-height:15.8px;color:#f0f0f0;white-space:nowrap;width:125.20000000000005px;text-align:center;transform:scaleX(0.91);">Space Type</div>
<div style="left:763.6px;top:301.92px;font-size:15.8px;line-height:15.8px;color:#f0f0f0;white-space:nowrap;width:125.10000000000002px;text-align:center;transform:scaleX(0.91);">Left Bound</div>
<div style="left:888.7px;top:301.92px;font-size:15.8px;line-height:15.8px;color:#f0f0f0;white-space:nowrap;width:125.19999999999993px;text-align:center;transform:scaleX(0.91);">Right Bound</div>
<div style="left:1013.9px;top:301.92px;font-size:15.8px;line-height:15.8px;color:#f0f0f0;white-space:nowrap;width:125.10000000000002px;text-align:center;transform:scaleX(0.91);">Top Bound</div>
<div style="left:1139.0px;top:301.92px;font-size:15.8px;line-height:15.8px;color:#f0f0f0;white-space:nowrap;width:125.20000000000005px;text-align:center;transform:scaleX(0.91);">Bottom Bound</div>
<div style="left:1264.2px;top:323.32px;font-size:15.8px;line-height:15.8px;color:#f0f0f0;white-space:nowrap;width:125.09999999999991px;text-align:center;transform:scaleX(0.91);">Calc SqFt</div>
<svg style="left:1367.3px;top:290px;" width="18" height="19" viewBox="0 0 18 19"><g fill="none" stroke="#707070" stroke-linejoin="miter"><path d="M2.6,6.3 H13" stroke-width="3"/><path d="M9.5,2.6 L13.4,6.3 L9.5,10" stroke-width="2.4"/><path d="M14,13 H3" stroke-width="3"/><path d="M6.1,9.3 L2.2,13 L6.1,16.7" stroke-width="2.4"/></g></svg>
<div style="left:1389.3px;top:323.32px;font-size:15.8px;line-height:15.8px;color:#f0f0f0;white-space:nowrap;width:125.20000000000005px;text-align:center;transform:scaleX(0.91);">Manual SqFt</div>
<svg style="left:1492.5px;top:290px;" width="18" height="19" viewBox="0 0 18 19"><g fill="none" stroke="#707070" stroke-linejoin="miter"><path d="M2.6,6.3 H13" stroke-width="3"/><path d="M9.5,2.6 L13.4,6.3 L9.5,10" stroke-width="2.4"/><path d="M14,13 H3" stroke-width="3"/><path d="M6.1,9.3 L2.2,13 L6.1,16.7" stroke-width="2.4"/></g></svg>
<div style="left:1514.5px;top:323.32px;font-size:15.8px;line-height:15.8px;color:#f0f0f0;white-space:nowrap;width:125.09999999999991px;text-align:center;transform:scaleX(0.91);">Override SqFt</div>
<div style="left:1639.6px;top:323.32px;font-size:15.8px;line-height:15.8px;color:#f0f0f0;white-space:nowrap;width:125.40000000000009px;text-align:center;transform:scaleX(0.91);">Load (kVa)</div>
<svg style="left:1743px;top:290px;" width="18" height="19" viewBox="0 0 18 19"><g fill="none" stroke="#707070" stroke-linejoin="miter"><path d="M2.6,6.3 H13" stroke-width="3"/><path d="M9.5,2.6 L13.4,6.3 L9.5,10" stroke-width="2.4"/><path d="M14,13 H3" stroke-width="3"/><path d="M6.1,9.3 L2.2,13 L6.1,16.7" stroke-width="2.4"/></g></svg>
<div style="left:125px;top:380px;width:1640px;height:563px;background:#416968;"></div>
<div style="left:163px;top:417.5px;width:37px;height:450px;background:#808080;"></div>
<div style="left:163px;top:905px;width:37px;height:38px;background:#808080;"></div>
<div style="left:238px;top:389.82px;font-size:15.8px;line-height:15.8px;color:#f2f2f2;white-space:nowrap;width:150.10000000000002px;text-align:center;transform:scaleX(0.91);">F0</div>
<div style="left:388.1px;top:389.82px;font-size:15.8px;line-height:15.8px;color:#f2f2f2;white-space:nowrap;width:125.10000000000002px;text-align:center;transform:scaleX(0.91);">0</div>
<div style="left:513.2px;top:389.82px;font-size:15.8px;line-height:15.8px;color:#cfcfcf;white-space:nowrap;width:125.19999999999993px;text-align:center;transform:scaleX(0.91);">20</div>
<div style="left:638.4px;top:391.82px;font-size:15.8px;line-height:15.8px;color:#f2f2f2;white-space:nowrap;width:125.20000000000005px;text-align:center;transform:scaleX(0.91);">Lobby</div>
<div style="left:763.6px;top:391.82px;font-size:15.8px;line-height:15.8px;color:#f2f2f2;white-space:nowrap;width:125.10000000000002px;text-align:center;transform:scaleX(0.91);">X.0</div>
<div style="left:888.7px;top:391.82px;font-size:15.8px;line-height:15.8px;color:#f2f2f2;white-space:nowrap;width:125.19999999999993px;text-align:center;transform:scaleX(0.91);">X3.2</div>
<div style="left:1013.9px;top:391.82px;font-size:15.8px;line-height:15.8px;color:#f2f2f2;white-space:nowrap;width:125.10000000000002px;text-align:center;transform:scaleX(0.91);">Y0</div>
<div style="left:1139.0px;top:391.82px;font-size:15.8px;line-height:15.8px;color:#f2f2f2;white-space:nowrap;width:125.20000000000005px;text-align:center;transform:scaleX(0.91);">Y14</div>
<div style="left:1264.2px;top:389.82px;font-size:15.8px;line-height:15.8px;color:#cfcfcf;white-space:nowrap;width:125.09999999999991px;text-align:center;transform:scaleX(0.91);">96000</div>
<div style="left:1389.3px;top:389.82px;font-size:15.8px;line-height:15.8px;color:#f2f2f2;white-space:nowrap;width:125.20000000000005px;text-align:center;transform:scaleX(0.91);">60000</div>
<div style="left:1568.8px;top:390.79999999999995px;width:16.2px;height:15.4px;background:#ffffff;border:1px solid #b8b8b8;box-sizing:border-box;border-radius:1px;"></div>
<div style="left:1639.6px;top:389.82px;font-size:15.8px;line-height:15.8px;color:#cfcfcf;white-space:nowrap;width:125.40000000000009px;text-align:center;transform:scaleX(0.91);">432 kVA</div>
<svg style="left:134px;top:388.4px;" width="21" height="20" viewBox="0 0 21 20"><path d="M10.2,0.5 V19 M1,9.8 H19.5" stroke="#3a3a3a" stroke-width="3"/></svg>
<svg style="left:174px;top:389.4px;" width="15" height="18" viewBox="0 0 15 18"><g fill="#3a3a3a"><rect x="5.2" y="0.3" width="4.2" height="1.6" rx="0.5"/><rect x="0.3" y="2.1" width="14" height="2.2" rx="0.4"/><path d="M1.2,5.3 H13.4 L12.5,17.3 H2.1 Z M3.7,6.9 L4.1,15.9 H5.3 L5.1,6.9 Z M6.6,6.9 V15.9 H8 V6.9 Z M9.5,6.9 L9.3,15.9 H10.5 L10.9,6.9 Z" fill-rule="evenodd"/></g></svg>
<svg style="left:210px;top:389.7px;" width="19" height="19" viewBox="0 0 19 19"><g fill="#3a3a3a"><rect x="7.2" y="0" width="4" height="5" rx="0.6" transform="rotate(22.5 9.2 9.2)"/><rect x="7.2" y="0" width="4" height="5" rx="0.6" transform="rotate(67.5 9.2 9.2)"/><rect x="7.2" y="0" width="4" height="5" rx="0.6" transform="rotate(112.5 9.2 9.2)"/><rect x="7.2" y="0" width="4" height="5" rx="0.6" transform="rotate(157.5 9.2 9.2)"/><rect x="7.2" y="0" width="4" height="5" rx="0.6" transform="rotate(202.5 9.2 9.2)"/><rect x="7.2" y="0" width="4" height="5" rx="0.6" transform="rotate(247.5 9.2 9.2)"/><rect x="7.2" y="0" width="4" height="5" rx="0.6" transform="rotate(292.5 9.2 9.2)"/><rect x="7.2" y="0" width="4" height="5" rx="0.6" transform="rotate(337.5 9.2 9.2)"/></g><circle cx="9.2" cy="9.2" r="5.6" fill="none" stroke="#3a3a3a" stroke-width="3.1"/></svg>
<div style="left:238px;top:427.37px;font-size:15.8px;line-height:15.8px;color:#f2f2f2;white-space:nowrap;width:150.10000000000002px;text-align:center;transform:scaleX(0.91);">F1</div>
<div style="left:388.1px;top:427.37px;font-size:15.8px;line-height:15.8px;color:#f2f2f2;white-space:nowrap;width:125.10000000000002px;text-align:center;transform:scaleX(0.91);">20</div>
<div style="left:513.2px;top:427.37px;font-size:15.8px;line-height:15.8px;color:#cfcfcf;white-space:nowrap;width:125.19999999999993px;text-align:center;transform:scaleX(0.91);">20</div>
<div style="left:638.4px;top:429.37px;font-size:15.8px;line-height:15.8px;color:#f2f2f2;white-space:nowrap;width:125.20000000000005px;text-align:center;transform:scaleX(0.91);">Office</div>
<div style="left:763.6px;top:429.37px;font-size:15.8px;line-height:15.8px;color:#f2f2f2;white-space:nowrap;width:125.10000000000002px;text-align:center;transform:scaleX(0.91);">X.0</div>
<div style="left:888.7px;top:429.37px;font-size:15.8px;line-height:15.8px;color:#f2f2f2;white-space:nowrap;width:125.19999999999993px;text-align:center;transform:scaleX(0.91);">X3.2</div>
<div style="left:1013.9px;top:429.37px;font-size:15.8px;line-height:15.8px;color:#f2f2f2;white-space:nowrap;width:125.10000000000002px;text-align:center;transform:scaleX(0.91);">Y0</div>
<div style="left:1139.0px;top:429.37px;font-size:15.8px;line-height:15.8px;color:#f2f2f2;white-space:nowrap;width:125.20000000000005px;text-align:center;transform:scaleX(0.91);">Y14</div>
<div style="left:1264.2px;top:427.37px;font-size:15.8px;line-height:15.8px;color:#cfcfcf;white-space:nowrap;width:125.09999999999991px;text-align:center;transform:scaleX(0.91);">96000</div>
<div style="left:1389.3px;top:427.37px;font-size:15.8px;line-height:15.8px;color:#f2f2f2;white-space:nowrap;width:125.20000000000005px;text-align:center;transform:scaleX(0.91);">60000</div>
<div style="left:1568.8px;top:428.34999999999997px;width:16.2px;height:15.4px;background:#ffffff;border:1px solid #b8b8b8;box-sizing:border-box;border-radius:1px;"></div>
<div style="left:1639.6px;top:427.37px;font-size:15.8px;line-height:15.8px;color:#cfcfcf;white-space:nowrap;width:125.40000000000009px;text-align:center;transform:scaleX(0.91);">384 kVA</div>
<svg style="left:134px;top:425.95px;" width="21" height="20" viewBox="0 0 21 20"><path d="M10.2,0.5 V19 M1,9.8 H19.5" stroke="#3a3a3a" stroke-width="3"/></svg>
<svg style="left:174px;top:426.95px;" width="15" height="18" viewBox="0 0 15 18"><g fill="#d8d8d8"><rect x="5.2" y="0.3" width="4.2" height="1.6" rx="0.5"/><rect x="0.3" y="2.1" width="14" height="2.2" rx="0.4"/><path d="M1.2,5.3 H13.4 L12.5,17.3 H2.1 Z M3.7,6.9 L4.1,15.9 H5.3 L5.1,6.9 Z M6.6,6.9 V15.9 H8 V6.9 Z M9.5,6.9 L9.3,15.9 H10.5 L10.9,6.9 Z" fill-rule="evenodd"/></g></svg>
<svg style="left:210px;top:427.25px;" width="19" height="19" viewBox="0 0 19 19"><g fill="#3a3a3a"><rect x="7.2" y="0" width="4" height="5" rx="0.6" transform="rotate(22.5 9.2 9.2)"/><rect x="7.2" y="0" width="4" height="5" rx="0.6" transform="rotate(67.5 9.2 9.2)"/><rect x="7.2" y="0" width="4" height="5" rx="0.6" transform="rotate(112.5 9.2 9.2)"/><rect x="7.2" y="0" width="4" height="5" rx="0.6" transform="rotate(157.5 9.2 9.2)"/><rect x="7.2" y="0" width="4" height="5" rx="0.6" transform="rotate(202.5 9.2 9.2)"/><rect x="7.2" y="0" width="4" height="5" rx="0.6" transform="rotate(247.5 9.2 9.2)"/><rect x="7.2" y="0" width="4" height="5" rx="0.6" transform="rotate(292.5 9.2 9.2)"/><rect x="7.2" y="0" width="4" height="5" rx="0.6" transform="rotate(337.5 9.2 9.2)"/></g><circle cx="9.2" cy="9.2" r="5.6" fill="none" stroke="#3a3a3a" stroke-width="3.1"/></svg>
<div style="left:238px;top:464.92px;font-size:15.8px;line-height:15.8px;color:#f2f2f2;white-space:nowrap;width:150.10000000000002px;text-align:center;transform:scaleX(0.91);">F2</div>
<div style="left:388.1px;top:464.92px;font-size:15.8px;line-height:15.8px;color:#f2f2f2;white-space:nowrap;width:125.10000000000002px;text-align:center;transform:scaleX(0.91);">40</div>
<div style="left:513.2px;top:464.92px;font-size:15.8px;line-height:15.8px;color:#cfcfcf;white-space:nowrap;width:125.19999999999993px;text-align:center;transform:scaleX(0.91);">20</div>
<div style="left:638.4px;top:466.92px;font-size:15.8px;line-height:15.8px;color:#f2f2f2;white-space:nowrap;width:125.20000000000005px;text-align:center;transform:scaleX(0.91);">Office</div>
<div style="left:763.6px;top:466.92px;font-size:15.8px;line-height:15.8px;color:#f2f2f2;white-space:nowrap;width:125.10000000000002px;text-align:center;transform:scaleX(0.91);">X.0</div>
<div style="left:888.7px;top:466.92px;font-size:15.8px;line-height:15.8px;color:#f2f2f2;white-space:nowrap;width:125.19999999999993px;text-align:center;transform:scaleX(0.91);">X3.2</div>
<div style="left:1013.9px;top:466.92px;font-size:15.8px;line-height:15.8px;color:#f2f2f2;white-space:nowrap;width:125.10000000000002px;text-align:center;transform:scaleX(0.91);">Y0</div>
<div style="left:1139.0px;top:466.92px;font-size:15.8px;line-height:15.8px;color:#f2f2f2;white-space:nowrap;width:125.20000000000005px;text-align:center;transform:scaleX(0.91);">Y14</div>
<div style="left:1264.2px;top:464.92px;font-size:15.8px;line-height:15.8px;color:#cfcfcf;white-space:nowrap;width:125.09999999999991px;text-align:center;transform:scaleX(0.91);">96000</div>
<div style="left:1389.3px;top:464.92px;font-size:15.8px;line-height:15.8px;color:#f2f2f2;white-space:nowrap;width:125.20000000000005px;text-align:center;transform:scaleX(0.91);">60000</div>
<div style="left:1568.8px;top:465.9px;width:16.2px;height:15.4px;background:#ffffff;border:1px solid #b8b8b8;box-sizing:border-box;border-radius:1px;"></div>
<div style="left:1639.6px;top:464.92px;font-size:15.8px;line-height:15.8px;color:#cfcfcf;white-space:nowrap;width:125.40000000000009px;text-align:center;transform:scaleX(0.91);">384 kVA</div>
<svg style="left:134px;top:463.5px;" width="21" height="20" viewBox="0 0 21 20"><path d="M10.2,0.5 V19 M1,9.8 H19.5" stroke="#3a3a3a" stroke-width="3"/></svg>
<svg style="left:174px;top:464.5px;" width="15" height="18" viewBox="0 0 15 18"><g fill="#d8d8d8"><rect x="5.2" y="0.3" width="4.2" height="1.6" rx="0.5"/><rect x="0.3" y="2.1" width="14" height="2.2" rx="0.4"/><path d="M1.2,5.3 H13.4 L12.5,17.3 H2.1 Z M3.7,6.9 L4.1,15.9 H5.3 L5.1,6.9 Z M6.6,6.9 V15.9 H8 V6.9 Z M9.5,6.9 L9.3,15.9 H10.5 L10.9,6.9 Z" fill-rule="evenodd"/></g></svg>
<svg style="left:210px;top:464.8px;" width="19" height="19" viewBox="0 0 19 19"><g fill="#3a3a3a"><rect x="7.2" y="0" width="4" height="5" rx="0.6" transform="rotate(22.5 9.2 9.2)"/><rect x="7.2" y="0" width="4" height="5" rx="0.6" transform="rotate(67.5 9.2 9.2)"/><rect x="7.2" y="0" width="4" height="5" rx="0.6" transform="rotate(112.5 9.2 9.2)"/><rect x="7.2" y="0" width="4" height="5" rx="0.6" transform="rotate(157.5 9.2 9.2)"/><rect x="7.2" y="0" width="4" height="5" rx="0.6" transform="rotate(202.5 9.2 9.2)"/><rect x="7.2" y="0" width="4" height="5" rx="0.6" transform="rotate(247.5 9.2 9.2)"/><rect x="7.2" y="0" width="4" height="5" rx="0.6" transform="rotate(292.5 9.2 9.2)"/><rect x="7.2" y="0" width="4" height="5" rx="0.6" transform="rotate(337.5 9.2 9.2)"/></g><circle cx="9.2" cy="9.2" r="5.6" fill="none" stroke="#3a3a3a" stroke-width="3.1"/></svg>
<div style="left:238px;top:502.47px;font-size:15.8px;line-height:15.8px;color:#f2f2f2;white-space:nowrap;width:150.10000000000002px;text-align:center;transform:scaleX(0.91);">F3</div>
<div style="left:388.1px;top:502.47px;font-size:15.8px;line-height:15.8px;color:#f2f2f2;white-space:nowrap;width:125.10000000000002px;text-align:center;transform:scaleX(0.91);">60</div>
<div style="left:513.2px;top:502.47px;font-size:15.8px;line-height:15.8px;color:#cfcfcf;white-space:nowrap;width:125.19999999999993px;text-align:center;transform:scaleX(0.91);">20</div>
<div style="left:638.4px;top:504.47px;font-size:15.8px;line-height:15.8px;color:#f2f2f2;white-space:nowrap;width:125.20000000000005px;text-align:center;transform:scaleX(0.91);">Office</div>
<div style="left:763.6px;top:504.47px;font-size:15.8px;line-height:15.8px;color:#f2f2f2;white-space:nowrap;width:125.10000000000002px;text-align:center;transform:scaleX(0.91);">X.0</div>
<div style="left:888.7px;top:504.47px;font-size:15.8px;line-height:15.8px;color:#f2f2f2;white-space:nowrap;width:125.19999999999993px;text-align:center;transform:scaleX(0.91);">X3.2</div>
<div style="left:1013.9px;top:504.47px;font-size:15.8px;line-height:15.8px;color:#f2f2f2;white-space:nowrap;width:125.10000000000002px;text-align:center;transform:scaleX(0.91);">Y0</div>
<div style="left:1139.0px;top:504.47px;font-size:15.8px;line-height:15.8px;color:#f2f2f2;white-space:nowrap;width:125.20000000000005px;text-align:center;transform:scaleX(0.91);">Y14</div>
<div style="left:1264.2px;top:502.47px;font-size:15.8px;line-height:15.8px;color:#cfcfcf;white-space:nowrap;width:125.09999999999991px;text-align:center;transform:scaleX(0.91);">96000</div>
<div style="left:1389.3px;top:502.47px;font-size:15.8px;line-height:15.8px;color:#f2f2f2;white-space:nowrap;width:125.20000000000005px;text-align:center;transform:scaleX(0.91);">60000</div>
<div style="left:1568.8px;top:503.44999999999993px;width:16.2px;height:15.4px;background:#ffffff;border:1px solid #b8b8b8;box-sizing:border-box;border-radius:1px;"></div>
<div style="left:1639.6px;top:502.47px;font-size:15.8px;line-height:15.8px;color:#cfcfcf;white-space:nowrap;width:125.40000000000009px;text-align:center;transform:scaleX(0.91);">384 kVA</div>
<svg style="left:134px;top:501.04999999999995px;" width="21" height="20" viewBox="0 0 21 20"><path d="M10.2,0.5 V19 M1,9.8 H19.5" stroke="#3a3a3a" stroke-width="3"/></svg>
<svg style="left:174px;top:502.04999999999995px;" width="15" height="18" viewBox="0 0 15 18"><g fill="#d8d8d8"><rect x="5.2" y="0.3" width="4.2" height="1.6" rx="0.5"/><rect x="0.3" y="2.1" width="14" height="2.2" rx="0.4"/><path d="M1.2,5.3 H13.4 L12.5,17.3 H2.1 Z M3.7,6.9 L4.1,15.9 H5.3 L5.1,6.9 Z M6.6,6.9 V15.9 H8 V6.9 Z M9.5,6.9 L9.3,15.9 H10.5 L10.9,6.9 Z" fill-rule="evenodd"/></g></svg>
<svg style="left:210px;top:502.34999999999997px;" width="19" height="19" viewBox="0 0 19 19"><g fill="#3a3a3a"><rect x="7.2" y="0" width="4" height="5" rx="0.6" transform="rotate(22.5 9.2 9.2)"/><rect x="7.2" y="0" width="4" height="5" rx="0.6" transform="rotate(67.5 9.2 9.2)"/><rect x="7.2" y="0" width="4" height="5" rx="0.6" transform="rotate(112.5 9.2 9.2)"/><rect x="7.2" y="0" width="4" height="5" rx="0.6" transform="rotate(157.5 9.2 9.2)"/><rect x="7.2" y="0" width="4" height="5" rx="0.6" transform="rotate(202.5 9.2 9.2)"/><rect x="7.2" y="0" width="4" height="5" rx="0.6" transform="rotate(247.5 9.2 9.2)"/><rect x="7.2" y="0" width="4" height="5" rx="0.6" transform="rotate(292.5 9.2 9.2)"/><rect x="7.2" y="0" width="4" height="5" rx="0.6" transform="rotate(337.5 9.2 9.2)"/></g><circle cx="9.2" cy="9.2" r="5.6" fill="none" stroke="#3a3a3a" stroke-width="3.1"/></svg>
<div style="left:238px;top:540.02px;font-size:15.8px;line-height:15.8px;color:#f2f2f2;white-space:nowrap;width:150.10000000000002px;text-align:center;transform:scaleX(0.91);">F4</div>
<div style="left:388.1px;top:540.02px;font-size:15.8px;line-height:15.8px;color:#f2f2f2;white-space:nowrap;width:125.10000000000002px;text-align:center;transform:scaleX(0.91);">80</div>
<div style="left:513.2px;top:540.02px;font-size:15.8px;line-height:15.8px;color:#cfcfcf;white-space:nowrap;width:125.19999999999993px;text-align:center;transform:scaleX(0.91);">20</div>
<div style="left:638.4px;top:542.02px;font-size:15.8px;line-height:15.8px;color:#f2f2f2;white-space:nowrap;width:125.20000000000005px;text-align:center;transform:scaleX(0.91);">Office</div>
<div style="left:763.6px;top:542.02px;font-size:15.8px;line-height:15.8px;color:#f2f2f2;white-space:nowrap;width:125.10000000000002px;text-align:center;transform:scaleX(0.91);">X.0</div>
<div style="left:888.7px;top:542.02px;font-size:15.8px;line-height:15.8px;color:#f2f2f2;white-space:nowrap;width:125.19999999999993px;text-align:center;transform:scaleX(0.91);">X3.2</div>
<div style="left:1013.9px;top:542.02px;font-size:15.8px;line-height:15.8px;color:#f2f2f2;white-space:nowrap;width:125.10000000000002px;text-align:center;transform:scaleX(0.91);">Y0</div>
<div style="left:1139.0px;top:542.02px;font-size:15.8px;line-height:15.8px;color:#f2f2f2;white-space:nowrap;width:125.20000000000005px;text-align:center;transform:scaleX(0.91);">Y14</div>
<div style="left:1264.2px;top:540.02px;font-size:15.8px;line-height:15.8px;color:#cfcfcf;white-space:nowrap;width:125.09999999999991px;text-align:center;transform:scaleX(0.91);">96000</div>
<div style="left:1389.3px;top:540.02px;font-size:15.8px;line-height:15.8px;color:#f2f2f2;white-space:nowrap;width:125.20000000000005px;text-align:center;transform:scaleX(0.91);">60000</div>
<div style="left:1568.8px;top:540.9999999999999px;width:16.2px;height:15.4px;background:#ffffff;border:1px solid #b8b8b8;box-sizing:border-box;border-radius:1px;"></div>
<div style="left:1639.6px;top:540.02px;font-size:15.8px;line-height:15.8px;color:#cfcfcf;white-space:nowrap;width:125.40000000000009px;text-align:center;transform:scaleX(0.91);">384 kVA</div>
<svg style="left:134px;top:538.5999999999999px;" width="21" height="20" viewBox="0 0 21 20"><path d="M10.2,0.5 V19 M1,9.8 H19.5" stroke="#3a3a3a" stroke-width="3"/></svg>
<svg style="left:174px;top:539.5999999999999px;" width="15" height="18" viewBox="0 0 15 18"><g fill="#d8d8d8"><rect x="5.2" y="0.3" width="4.2" height="1.6" rx="0.5"/><rect x="0.3" y="2.1" width="14" height="2.2" rx="0.4"/><path d="M1.2,5.3 H13.4 L12.5,17.3 H2.1 Z M3.7,6.9 L4.1,15.9 H5.3 L5.1,6.9 Z M6.6,6.9 V15.9 H8 V6.9 Z M9.5,6.9 L9.3,15.9 H10.5 L10.9,6.9 Z" fill-rule="evenodd"/></g></svg>
<svg style="left:210px;top:539.8999999999999px;" width="19" height="19" viewBox="0 0 19 19"><g fill="#3a3a3a"><rect x="7.2" y="0" width="4" height="5" rx="0.6" transform="rotate(22.5 9.2 9.2)"/><rect x="7.2" y="0" width="4" height="5" rx="0.6" transform="rotate(67.5 9.2 9.2)"/><rect x="7.2" y="0" width="4" height="5" rx="0.6" transform="rotate(112.5 9.2 9.2)"/><rect x="7.2" y="0" width="4" height="5" rx="0.6" transform="rotate(157.5 9.2 9.2)"/><rect x="7.2" y="0" width="4" height="5" rx="0.6" transform="rotate(202.5 9.2 9.2)"/><rect x="7.2" y="0" width="4" height="5" rx="0.6" transform="rotate(247.5 9.2 9.2)"/><rect x="7.2" y="0" width="4" height="5" rx="0.6" transform="rotate(292.5 9.2 9.2)"/><rect x="7.2" y="0" width="4" height="5" rx="0.6" transform="rotate(337.5 9.2 9.2)"/></g><circle cx="9.2" cy="9.2" r="5.6" fill="none" stroke="#3a3a3a" stroke-width="3.1"/></svg>
<div style="left:238px;top:577.57px;font-size:15.8px;line-height:15.8px;color:#f2f2f2;white-space:nowrap;width:150.10000000000002px;text-align:center;transform:scaleX(0.91);">F5</div>
<div style="left:388.1px;top:577.57px;font-size:15.8px;line-height:15.8px;color:#f2f2f2;white-space:nowrap;width:125.10000000000002px;text-align:center;transform:scaleX(0.91);">100</div>
<div style="left:513.2px;top:577.57px;font-size:15.8px;line-height:15.8px;color:#cfcfcf;white-space:nowrap;width:125.19999999999993px;text-align:center;transform:scaleX(0.91);">20</div>
<div style="left:638.4px;top:579.57px;font-size:15.8px;line-height:15.8px;color:#f2f2f2;white-space:nowrap;width:125.20000000000005px;text-align:center;transform:scaleX(0.91);">Office</div>
<div style="left:763.6px;top:579.57px;font-size:15.8px;line-height:15.8px;color:#f2f2f2;white-space:nowrap;width:125.10000000000002px;text-align:center;transform:scaleX(0.91);">X.0</div>
<div style="left:888.7px;top:579.57px;font-size:15.8px;line-height:15.8px;color:#f2f2f2;white-space:nowrap;width:125.19999999999993px;text-align:center;transform:scaleX(0.91);">X3.2</div>
<div style="left:1013.9px;top:579.57px;font-size:15.8px;line-height:15.8px;color:#f2f2f2;white-space:nowrap;width:125.10000000000002px;text-align:center;transform:scaleX(0.91);">Y0</div>
<div style="left:1139.0px;top:579.57px;font-size:15.8px;line-height:15.8px;color:#f2f2f2;white-space:nowrap;width:125.20000000000005px;text-align:center;transform:scaleX(0.91);">Y14</div>
<div style="left:1264.2px;top:577.57px;font-size:15.8px;line-height:15.8px;color:#cfcfcf;white-space:nowrap;width:125.09999999999991px;text-align:center;transform:scaleX(0.91);">96000</div>
<div style="left:1389.3px;top:577.57px;font-size:15.8px;line-height:15.8px;color:#f2f2f2;white-space:nowrap;width:125.20000000000005px;text-align:center;transform:scaleX(0.91);">60000</div>
<div style="left:1568.8px;top:578.55px;width:16.2px;height:15.4px;background:#ffffff;border:1px solid #b8b8b8;box-sizing:border-box;border-radius:1px;"></div>
<div style="left:1639.6px;top:577.57px;font-size:15.8px;line-height:15.8px;color:#cfcfcf;white-space:nowrap;width:125.40000000000009px;text-align:center;transform:scaleX(0.91);">384 kVA</div>
<svg style="left:134px;top:576.15px;" width="21" height="20" viewBox="0 0 21 20"><path d="M10.2,0.5 V19 M1,9.8 H19.5" stroke="#3a3a3a" stroke-width="3"/></svg>
<svg style="left:174px;top:577.15px;" width="15" height="18" viewBox="0 0 15 18"><g fill="#d8d8d8"><rect x="5.2" y="0.3" width="4.2" height="1.6" rx="0.5"/><rect x="0.3" y="2.1" width="14" height="2.2" rx="0.4"/><path d="M1.2,5.3 H13.4 L12.5,17.3 H2.1 Z M3.7,6.9 L4.1,15.9 H5.3 L5.1,6.9 Z M6.6,6.9 V15.9 H8 V6.9 Z M9.5,6.9 L9.3,15.9 H10.5 L10.9,6.9 Z" fill-rule="evenodd"/></g></svg>
<svg style="left:210px;top:577.4499999999999px;" width="19" height="19" viewBox="0 0 19 19"><g fill="#3a3a3a"><rect x="7.2" y="0" width="4" height="5" rx="0.6" transform="rotate(22.5 9.2 9.2)"/><rect x="7.2" y="0" width="4" height="5" rx="0.6" transform="rotate(67.5 9.2 9.2)"/><rect x="7.2" y="0" width="4" height="5" rx="0.6" transform="rotate(112.5 9.2 9.2)"/><rect x="7.2" y="0" width="4" height="5" rx="0.6" transform="rotate(157.5 9.2 9.2)"/><rect x="7.2" y="0" width="4" height="5" rx="0.6" transform="rotate(202.5 9.2 9.2)"/><rect x="7.2" y="0" width="4" height="5" rx="0.6" transform="rotate(247.5 9.2 9.2)"/><rect x="7.2" y="0" width="4" height="5" rx="0.6" transform="rotate(292.5 9.2 9.2)"/><rect x="7.2" y="0" width="4" height="5" rx="0.6" transform="rotate(337.5 9.2 9.2)"/></g><circle cx="9.2" cy="9.2" r="5.6" fill="none" stroke="#3a3a3a" stroke-width="3.1"/></svg>
<div style="left:238px;top:615.12px;font-size:15.8px;line-height:15.8px;color:#f2f2f2;white-space:nowrap;width:150.10000000000002px;text-align:center;transform:scaleX(0.91);">F6</div>
<div style="left:388.1px;top:615.12px;font-size:15.8px;line-height:15.8px;color:#f2f2f2;white-space:nowrap;width:125.10000000000002px;text-align:center;transform:scaleX(0.91);">120</div>
<div style="left:513.2px;top:615.12px;font-size:15.8px;line-height:15.8px;color:#cfcfcf;white-space:nowrap;width:125.19999999999993px;text-align:center;transform:scaleX(0.91);">20</div>
<div style="left:638.4px;top:617.12px;font-size:15.8px;line-height:15.8px;color:#f2f2f2;white-space:nowrap;width:125.20000000000005px;text-align:center;transform:scaleX(0.91);">Office</div>
<div style="left:763.6px;top:617.12px;font-size:15.8px;line-height:15.8px;color:#f2f2f2;white-space:nowrap;width:125.10000000000002px;text-align:center;transform:scaleX(0.91);">X.0</div>
<div style="left:888.7px;top:617.12px;font-size:15.8px;line-height:15.8px;color:#f2f2f2;white-space:nowrap;width:125.19999999999993px;text-align:center;transform:scaleX(0.91);">X3.2</div>
<div style="left:1013.9px;top:617.12px;font-size:15.8px;line-height:15.8px;color:#f2f2f2;white-space:nowrap;width:125.10000000000002px;text-align:center;transform:scaleX(0.91);">Y0</div>
<div style="left:1139.0px;top:617.12px;font-size:15.8px;line-height:15.8px;color:#f2f2f2;white-space:nowrap;width:125.20000000000005px;text-align:center;transform:scaleX(0.91);">Y14</div>
<div style="left:1264.2px;top:615.12px;font-size:15.8px;line-height:15.8px;color:#cfcfcf;white-space:nowrap;width:125.09999999999991px;text-align:center;transform:scaleX(0.91);">96000</div>
<div style="left:1389.3px;top:615.12px;font-size:15.8px;line-height:15.8px;color:#f2f2f2;white-space:nowrap;width:125.20000000000005px;text-align:center;transform:scaleX(0.91);">60000</div>
<div style="left:1568.8px;top:616.0999999999999px;width:16.2px;height:15.4px;background:#ffffff;border:1px solid #b8b8b8;box-sizing:border-box;border-radius:1px;"></div>
<div style="left:1639.6px;top:615.12px;font-size:15.8px;line-height:15.8px;color:#cfcfcf;white-space:nowrap;width:125.40000000000009px;text-align:center;transform:scaleX(0.91);">384 kVA</div>
<svg style="left:134px;top:613.6999999999999px;" width="21" height="20" viewBox="0 0 21 20"><path d="M10.2,0.5 V19 M1,9.8 H19.5" stroke="#3a3a3a" stroke-width="3"/></svg>
<svg style="left:174px;top:614.6999999999999px;" width="15" height="18" viewBox="0 0 15 18"><g fill="#d8d8d8"><rect x="5.2" y="0.3" width="4.2" height="1.6" rx="0.5"/><rect x="0.3" y="2.1" width="14" height="2.2" rx="0.4"/><path d="M1.2,5.3 H13.4 L12.5,17.3 H2.1 Z M3.7,6.9 L4.1,15.9 H5.3 L5.1,6.9 Z M6.6,6.9 V15.9 H8 V6.9 Z M9.5,6.9 L9.3,15.9 H10.5 L10.9,6.9 Z" fill-rule="evenodd"/></g></svg>
<svg style="left:210px;top:614.9999999999999px;" width="19" height="19" viewBox="0 0 19 19"><g fill="#3a3a3a"><rect x="7.2" y="0" width="4" height="5" rx="0.6" transform="rotate(22.5 9.2 9.2)"/><rect x="7.2" y="0" width="4" height="5" rx="0.6" transform="rotate(67.5 9.2 9.2)"/><rect x="7.2" y="0" width="4" height="5" rx="0.6" transform="rotate(112.5 9.2 9.2)"/><rect x="7.2" y="0" width="4" height="5" rx="0.6" transform="rotate(157.5 9.2 9.2)"/><rect x="7.2" y="0" width="4" height="5" rx="0.6" transform="rotate(202.5 9.2 9.2)"/><rect x="7.2" y="0" width="4" height="5" rx="0.6" transform="rotate(247.5 9.2 9.2)"/><rect x="7.2" y="0" width="4" height="5" rx="0.6" transform="rotate(292.5 9.2 9.2)"/><rect x="7.2" y="0" width="4" height="5" rx="0.6" transform="rotate(337.5 9.2 9.2)"/></g><circle cx="9.2" cy="9.2" r="5.6" fill="none" stroke="#3a3a3a" stroke-width="3.1"/></svg>
<div style="left:238px;top:652.67px;font-size:15.8px;line-height:15.8px;color:#f2f2f2;white-space:nowrap;width:150.10000000000002px;text-align:center;transform:scaleX(0.91);">F7</div>
<div style="left:388.1px;top:652.67px;font-size:15.8px;line-height:15.8px;color:#f2f2f2;white-space:nowrap;width:125.10000000000002px;text-align:center;transform:scaleX(0.91);">140</div>
<div style="left:513.2px;top:652.67px;font-size:15.8px;line-height:15.8px;color:#cfcfcf;white-space:nowrap;width:125.19999999999993px;text-align:center;transform:scaleX(0.91);">20</div>
<div style="left:638.4px;top:654.67px;font-size:15.8px;line-height:15.8px;color:#f2f2f2;white-space:nowrap;width:125.20000000000005px;text-align:center;transform:scaleX(0.91);">Office</div>
<div style="left:763.6px;top:654.67px;font-size:15.8px;line-height:15.8px;color:#f2f2f2;white-space:nowrap;width:125.10000000000002px;text-align:center;transform:scaleX(0.91);">X.0</div>
<div style="left:888.7px;top:654.67px;font-size:15.8px;line-height:15.8px;color:#f2f2f2;white-space:nowrap;width:125.19999999999993px;text-align:center;transform:scaleX(0.91);">X3.2</div>
<div style="left:1013.9px;top:654.67px;font-size:15.8px;line-height:15.8px;color:#f2f2f2;white-space:nowrap;width:125.10000000000002px;text-align:center;transform:scaleX(0.91);">Y0</div>
<div style="left:1139.0px;top:654.67px;font-size:15.8px;line-height:15.8px;color:#f2f2f2;white-space:nowrap;width:125.20000000000005px;text-align:center;transform:scaleX(0.91);">Y14</div>
<div style="left:1264.2px;top:652.67px;font-size:15.8px;line-height:15.8px;color:#cfcfcf;white-space:nowrap;width:125.09999999999991px;text-align:center;transform:scaleX(0.91);">96000</div>
<div style="left:1389.3px;top:652.67px;font-size:15.8px;line-height:15.8px;color:#f2f2f2;white-space:nowrap;width:125.20000000000005px;text-align:center;transform:scaleX(0.91);">60000</div>
<div style="left:1568.8px;top:653.65px;width:16.2px;height:15.4px;background:#ffffff;border:1px solid #b8b8b8;box-sizing:border-box;border-radius:1px;"></div>
<div style="left:1639.6px;top:652.67px;font-size:15.8px;line-height:15.8px;color:#cfcfcf;white-space:nowrap;width:125.40000000000009px;text-align:center;transform:scaleX(0.91);">384 kVA</div>
<svg style="left:134px;top:651.25px;" width="21" height="20" viewBox="0 0 21 20"><path d="M10.2,0.5 V19 M1,9.8 H19.5" stroke="#3a3a3a" stroke-width="3"/></svg>
<svg style="left:174px;top:652.25px;" width="15" height="18" viewBox="0 0 15 18"><g fill="#d8d8d8"><rect x="5.2" y="0.3" width="4.2" height="1.6" rx="0.5"/><rect x="0.3" y="2.1" width="14" height="2.2" rx="0.4"/><path d="M1.2,5.3 H13.4 L12.5,17.3 H2.1 Z M3.7,6.9 L4.1,15.9 H5.3 L5.1,6.9 Z M6.6,6.9 V15.9 H8 V6.9 Z M9.5,6.9 L9.3,15.9 H10.5 L10.9,6.9 Z" fill-rule="evenodd"/></g></svg>
<svg style="left:210px;top:652.55px;" width="19" height="19" viewBox="0 0 19 19"><g fill="#3a3a3a"><rect x="7.2" y="0" width="4" height="5" rx="0.6" transform="rotate(22.5 9.2 9.2)"/><rect x="7.2" y="0" width="4" height="5" rx="0.6" transform="rotate(67.5 9.2 9.2)"/><rect x="7.2" y="0" width="4" height="5" rx="0.6" transform="rotate(112.5 9.2 9.2)"/><rect x="7.2" y="0" width="4" height="5" rx="0.6" transform="rotate(157.5 9.2 9.2)"/><rect x="7.2" y="0" width="4" height="5" rx="0.6" transform="rotate(202.5 9.2 9.2)"/><rect x="7.2" y="0" width="4" height="5" rx="0.6" transform="rotate(247.5 9.2 9.2)"/><rect x="7.2" y="0" width="4" height="5" rx="0.6" transform="rotate(292.5 9.2 9.2)"/><rect x="7.2" y="0" width="4" height="5" rx="0.6" transform="rotate(337.5 9.2 9.2)"/></g><circle cx="9.2" cy="9.2" r="5.6" fill="none" stroke="#3a3a3a" stroke-width="3.1"/></svg>
<div style="left:238px;top:690.22px;font-size:15.8px;line-height:15.8px;color:#f2f2f2;white-space:nowrap;width:150.10000000000002px;text-align:center;transform:scaleX(0.91);">F8</div>
<div style="left:388.1px;top:690.22px;font-size:15.8px;line-height:15.8px;color:#f2f2f2;white-space:nowrap;width:125.10000000000002px;text-align:center;transform:scaleX(0.91);">160</div>
<div style="left:513.2px;top:690.22px;font-size:15.8px;line-height:15.8px;color:#cfcfcf;white-space:nowrap;width:125.19999999999993px;text-align:center;transform:scaleX(0.91);">20</div>
<div style="left:638.4px;top:692.22px;font-size:15.8px;line-height:15.8px;color:#f2f2f2;white-space:nowrap;width:125.20000000000005px;text-align:center;transform:scaleX(0.91);">Office</div>
<div style="left:763.6px;top:692.22px;font-size:15.8px;line-height:15.8px;color:#f2f2f2;white-space:nowrap;width:125.10000000000002px;text-align:center;transform:scaleX(0.91);">X.0</div>
<div style="left:888.7px;top:692.22px;font-size:15.8px;line-height:15.8px;color:#f2f2f2;white-space:nowrap;width:125.19999999999993px;text-align:center;transform:scaleX(0.91);">X3.2</div>
<div style="left:1013.9px;top:692.22px;font-size:15.8px;line-height:15.8px;color:#f2f2f2;white-space:nowrap;width:125.10000000000002px;text-align:center;transform:scaleX(0.91);">Y0</div>
<div style="left:1139.0px;top:692.22px;font-size:15.8px;line-height:15.8px;color:#f2f2f2;white-space:nowrap;width:125.20000000000005px;text-align:center;transform:scaleX(0.91);">Y14</div>
<div style="left:1264.2px;top:690.22px;font-size:15.8px;line-height:15.8px;color:#cfcfcf;white-space:nowrap;width:125.09999999999991px;text-align:center;transform:scaleX(0.91);">96000</div>
<div style="left:1389.3px;top:690.22px;font-size:15.8px;line-height:15.8px;color:#f2f2f2;white-space:nowrap;width:125.20000000000005px;text-align:center;transform:scaleX(0.91);">60000</div>
<div style="left:1568.8px;top:691.1999999999999px;width:16.2px;height:15.4px;background:#ffffff;border:1px solid #b8b8b8;box-sizing:border-box;border-radius:1px;"></div>
<div style="left:1639.6px;top:690.22px;font-size:15.8px;line-height:15.8px;color:#cfcfcf;white-space:nowrap;width:125.40000000000009px;text-align:center;transform:scaleX(0.91);">384 kVA</div>
<svg style="left:134px;top:688.8px;" width="21" height="20" viewBox="0 0 21 20"><path d="M10.2,0.5 V19 M1,9.8 H19.5" stroke="#3a3a3a" stroke-width="3"/></svg>
<svg style="left:174px;top:689.8px;" width="15" height="18" viewBox="0 0 15 18"><g fill="#d8d8d8"><rect x="5.2" y="0.3" width="4.2" height="1.6" rx="0.5"/><rect x="0.3" y="2.1" width="14" height="2.2" rx="0.4"/><path d="M1.2,5.3 H13.4 L12.5,17.3 H2.1 Z M3.7,6.9 L4.1,15.9 H5.3 L5.1,6.9 Z M6.6,6.9 V15.9 H8 V6.9 Z M9.5,6.9 L9.3,15.9 H10.5 L10.9,6.9 Z" fill-rule="evenodd"/></g></svg>
<svg style="left:210px;top:690.0999999999999px;" width="19" height="19" viewBox="0 0 19 19"><g fill="#3a3a3a"><rect x="7.2" y="0" width="4" height="5" rx="0.6" transform="rotate(22.5 9.2 9.2)"/><rect x="7.2" y="0" width="4" height="5" rx="0.6" transform="rotate(67.5 9.2 9.2)"/><rect x="7.2" y="0" width="4" height="5" rx="0.6" transform="rotate(112.5 9.2 9.2)"/><rect x="7.2" y="0" width="4" height="5" rx="0.6" transform="rotate(157.5 9.2 9.2)"/><rect x="7.2" y="0" width="4" height="5" rx="0.6" transform="rotate(202.5 9.2 9.2)"/><rect x="7.2" y="0" width="4" height="5" rx="0.6" transform="rotate(247.5 9.2 9.2)"/><rect x="7.2" y="0" width="4" height="5" rx="0.6" transform="rotate(292.5 9.2 9.2)"/><rect x="7.2" y="0" width="4" height="5" rx="0.6" transform="rotate(337.5 9.2 9.2)"/></g><circle cx="9.2" cy="9.2" r="5.6" fill="none" stroke="#3a3a3a" stroke-width="3.1"/></svg>
<div style="left:238px;top:727.77px;font-size:15.8px;line-height:15.8px;color:#f2f2f2;white-space:nowrap;width:150.10000000000002px;text-align:center;transform:scaleX(0.91);">F9</div>
<div style="left:388.1px;top:727.77px;font-size:15.8px;line-height:15.8px;color:#f2f2f2;white-space:nowrap;width:125.10000000000002px;text-align:center;transform:scaleX(0.91);">180</div>
<div style="left:513.2px;top:727.77px;font-size:15.8px;line-height:15.8px;color:#cfcfcf;white-space:nowrap;width:125.19999999999993px;text-align:center;transform:scaleX(0.91);">20</div>
<div style="left:638.4px;top:729.77px;font-size:15.8px;line-height:15.8px;color:#f2f2f2;white-space:nowrap;width:125.20000000000005px;text-align:center;transform:scaleX(0.91);">Office</div>
<div style="left:763.6px;top:729.77px;font-size:15.8px;line-height:15.8px;color:#f2f2f2;white-space:nowrap;width:125.10000000000002px;text-align:center;transform:scaleX(0.91);">X.0</div>
<div style="left:888.7px;top:729.77px;font-size:15.8px;line-height:15.8px;color:#f2f2f2;white-space:nowrap;width:125.19999999999993px;text-align:center;transform:scaleX(0.91);">X3.2</div>
<div style="left:1013.9px;top:729.77px;font-size:15.8px;line-height:15.8px;color:#f2f2f2;white-space:nowrap;width:125.10000000000002px;text-align:center;transform:scaleX(0.91);">Y0</div>
<div style="left:1139.0px;top:729.77px;font-size:15.8px;line-height:15.8px;color:#f2f2f2;white-space:nowrap;width:125.20000000000005px;text-align:center;transform:scaleX(0.91);">Y14</div>
<div style="left:1264.2px;top:727.77px;font-size:15.8px;line-height:15.8px;color:#cfcfcf;white-space:nowrap;width:125.09999999999991px;text-align:center;transform:scaleX(0.91);">96000</div>
<div style="left:1389.3px;top:727.77px;font-size:15.8px;line-height:15.8px;color:#f2f2f2;white-space:nowrap;width:125.20000000000005px;text-align:center;transform:scaleX(0.91);">60000</div>
<div style="left:1568.8px;top:728.7499999999999px;width:16.2px;height:15.4px;background:#ffffff;border:1px solid #b8b8b8;box-sizing:border-box;border-radius:1px;"></div>
<div style="left:1639.6px;top:727.77px;font-size:15.8px;line-height:15.8px;color:#cfcfcf;white-space:nowrap;width:125.40000000000009px;text-align:center;transform:scaleX(0.91);">384 kVA</div>
<svg style="left:134px;top:726.3499999999999px;" width="21" height="20" viewBox="0 0 21 20"><path d="M10.2,0.5 V19 M1,9.8 H19.5" stroke="#3a3a3a" stroke-width="3"/></svg>
<svg style="left:174px;top:727.3499999999999px;" width="15" height="18" viewBox="0 0 15 18"><g fill="#d8d8d8"><rect x="5.2" y="0.3" width="4.2" height="1.6" rx="0.5"/><rect x="0.3" y="2.1" width="14" height="2.2" rx="0.4"/><path d="M1.2,5.3 H13.4 L12.5,17.3 H2.1 Z M3.7,6.9 L4.1,15.9 H5.3 L5.1,6.9 Z M6.6,6.9 V15.9 H8 V6.9 Z M9.5,6.9 L9.3,15.9 H10.5 L10.9,6.9 Z" fill-rule="evenodd"/></g></svg>
<svg style="left:210px;top:727.6499999999999px;" width="19" height="19" viewBox="0 0 19 19"><g fill="#3a3a3a"><rect x="7.2" y="0" width="4" height="5" rx="0.6" transform="rotate(22.5 9.2 9.2)"/><rect x="7.2" y="0" width="4" height="5" rx="0.6" transform="rotate(67.5 9.2 9.2)"/><rect x="7.2" y="0" width="4" height="5" rx="0.6" transform="rotate(112.5 9.2 9.2)"/><rect x="7.2" y="0" width="4" height="5" rx="0.6" transform="rotate(157.5 9.2 9.2)"/><rect x="7.2" y="0" width="4" height="5" rx="0.6" transform="rotate(202.5 9.2 9.2)"/><rect x="7.2" y="0" width="4" height="5" rx="0.6" transform="rotate(247.5 9.2 9.2)"/><rect x="7.2" y="0" width="4" height="5" rx="0.6" transform="rotate(292.5 9.2 9.2)"/><rect x="7.2" y="0" width="4" height="5" rx="0.6" transform="rotate(337.5 9.2 9.2)"/></g><circle cx="9.2" cy="9.2" r="5.6" fill="none" stroke="#3a3a3a" stroke-width="3.1"/></svg>
<div style="left:238px;top:765.32px;font-size:15.8px;line-height:15.8px;color:#f2f2f2;white-space:nowrap;width:150.10000000000002px;text-align:center;transform:scaleX(0.91);">F10</div>
<div style="left:388.1px;top:765.32px;font-size:15.8px;line-height:15.8px;color:#f2f2f2;white-space:nowrap;width:125.10000000000002px;text-align:center;transform:scaleX(0.91);">200</div>
<div style="left:513.2px;top:765.32px;font-size:15.8px;line-height:15.8px;color:#cfcfcf;white-space:nowrap;width:125.19999999999993px;text-align:center;transform:scaleX(0.91);">20</div>
<div style="left:638.4px;top:767.32px;font-size:15.8px;line-height:15.8px;color:#f2f2f2;white-space:nowrap;width:125.20000000000005px;text-align:center;transform:scaleX(0.91);">Office</div>
<div style="left:763.6px;top:767.32px;font-size:15.8px;line-height:15.8px;color:#f2f2f2;white-space:nowrap;width:125.10000000000002px;text-align:center;transform:scaleX(0.91);">X.0</div>
<div style="left:888.7px;top:767.32px;font-size:15.8px;line-height:15.8px;color:#f2f2f2;white-space:nowrap;width:125.19999999999993px;text-align:center;transform:scaleX(0.91);">X3.2</div>
<div style="left:1013.9px;top:767.32px;font-size:15.8px;line-height:15.8px;color:#f2f2f2;white-space:nowrap;width:125.10000000000002px;text-align:center;transform:scaleX(0.91);">Y0</div>
<div style="left:1139.0px;top:767.32px;font-size:15.8px;line-height:15.8px;color:#f2f2f2;white-space:nowrap;width:125.20000000000005px;text-align:center;transform:scaleX(0.91);">Y14</div>
<div style="left:1264.2px;top:765.32px;font-size:15.8px;line-height:15.8px;color:#cfcfcf;white-space:nowrap;width:125.09999999999991px;text-align:center;transform:scaleX(0.91);">96000</div>
<div style="left:1389.3px;top:765.32px;font-size:15.8px;line-height:15.8px;color:#f2f2f2;white-space:nowrap;width:125.20000000000005px;text-align:center;transform:scaleX(0.91);">60000</div>
<div style="left:1568.8px;top:766.3px;width:16.2px;height:15.4px;background:#ffffff;border:1px solid #b8b8b8;box-sizing:border-box;border-radius:1px;"></div>
<div style="left:1639.6px;top:765.32px;font-size:15.8px;line-height:15.8px;color:#cfcfcf;white-space:nowrap;width:125.40000000000009px;text-align:center;transform:scaleX(0.91);">384 kVA</div>
<svg style="left:134px;top:763.9px;" width="21" height="20" viewBox="0 0 21 20"><path d="M10.2,0.5 V19 M1,9.8 H19.5" stroke="#3a3a3a" stroke-width="3"/></svg>
<svg style="left:174px;top:764.9px;" width="15" height="18" viewBox="0 0 15 18"><g fill="#d8d8d8"><rect x="5.2" y="0.3" width="4.2" height="1.6" rx="0.5"/><rect x="0.3" y="2.1" width="14" height="2.2" rx="0.4"/><path d="M1.2,5.3 H13.4 L12.5,17.3 H2.1 Z M3.7,6.9 L4.1,15.9 H5.3 L5.1,6.9 Z M6.6,6.9 V15.9 H8 V6.9 Z M9.5,6.9 L9.3,15.9 H10.5 L10.9,6.9 Z" fill-rule="evenodd"/></g></svg>
<svg style="left:210px;top:765.1999999999999px;" width="19" height="19" viewBox="0 0 19 19"><g fill="#3a3a3a"><rect x="7.2" y="0" width="4" height="5" rx="0.6" transform="rotate(22.5 9.2 9.2)"/><rect x="7.2" y="0" width="4" height="5" rx="0.6" transform="rotate(67.5 9.2 9.2)"/><rect x="7.2" y="0" width="4" height="5" rx="0.6" transform="rotate(112.5 9.2 9.2)"/><rect x="7.2" y="0" width="4" height="5" rx="0.6" transform="rotate(157.5 9.2 9.2)"/><rect x="7.2" y="0" width="4" height="5" rx="0.6" transform="rotate(202.5 9.2 9.2)"/><rect x="7.2" y="0" width="4" height="5" rx="0.6" transform="rotate(247.5 9.2 9.2)"/><rect x="7.2" y="0" width="4" height="5" rx="0.6" transform="rotate(292.5 9.2 9.2)"/><rect x="7.2" y="0" width="4" height="5" rx="0.6" transform="rotate(337.5 9.2 9.2)"/></g><circle cx="9.2" cy="9.2" r="5.6" fill="none" stroke="#3a3a3a" stroke-width="3.1"/></svg>
<div style="left:238px;top:802.87px;font-size:15.8px;line-height:15.8px;color:#f2f2f2;white-space:nowrap;width:150.10000000000002px;text-align:center;transform:scaleX(0.91);">F11</div>
<div style="left:388.1px;top:802.87px;font-size:15.8px;line-height:15.8px;color:#f2f2f2;white-space:nowrap;width:125.10000000000002px;text-align:center;transform:scaleX(0.91);">220</div>
<div style="left:513.2px;top:802.87px;font-size:15.8px;line-height:15.8px;color:#cfcfcf;white-space:nowrap;width:125.19999999999993px;text-align:center;transform:scaleX(0.91);">20</div>
<div style="left:638.4px;top:804.87px;font-size:15.8px;line-height:15.8px;color:#f2f2f2;white-space:nowrap;width:125.20000000000005px;text-align:center;transform:scaleX(0.91);">Office</div>
<div style="left:763.6px;top:804.87px;font-size:15.8px;line-height:15.8px;color:#f2f2f2;white-space:nowrap;width:125.10000000000002px;text-align:center;transform:scaleX(0.91);">X.0</div>
<div style="left:888.7px;top:804.87px;font-size:15.8px;line-height:15.8px;color:#f2f2f2;white-space:nowrap;width:125.19999999999993px;text-align:center;transform:scaleX(0.91);">X3.2</div>
<div style="left:1013.9px;top:804.87px;font-size:15.8px;line-height:15.8px;color:#f2f2f2;white-space:nowrap;width:125.10000000000002px;text-align:center;transform:scaleX(0.91);">Y0</div>
<div style="left:1139.0px;top:804.87px;font-size:15.8px;line-height:15.8px;color:#f2f2f2;white-space:nowrap;width:125.20000000000005px;text-align:center;transform:scaleX(0.91);">Y14</div>
<div style="left:1264.2px;top:802.87px;font-size:15.8px;line-height:15.8px;color:#cfcfcf;white-space:nowrap;width:125.09999999999991px;text-align:center;transform:scaleX(0.91);">96000</div>
<div style="left:1389.3px;top:802.87px;font-size:15.8px;line-height:15.8px;color:#f2f2f2;white-space:nowrap;width:125.20000000000005px;text-align:center;transform:scaleX(0.91);">60000</div>
<div style="left:1568.8px;top:803.8499999999999px;width:16.2px;height:15.4px;background:#ffffff;border:1px solid #b8b8b8;box-sizing:border-box;border-radius:1px;"></div>
<div style="left:1639.6px;top:802.87px;font-size:15.8px;line-height:15.8px;color:#cfcfcf;white-space:nowrap;width:125.40000000000009px;text-align:center;transform:scaleX(0.91);">384 kVA</div>
<svg style="left:134px;top:801.4499999999999px;" width="21" height="20" viewBox="0 0 21 20"><path d="M10.2,0.5 V19 M1,9.8 H19.5" stroke="#3a3a3a" stroke-width="3"/></svg>
<svg style="left:174px;top:802.4499999999999px;" width="15" height="18" viewBox="0 0 15 18"><g fill="#d8d8d8"><rect x="5.2" y="0.3" width="4.2" height="1.6" rx="0.5"/><rect x="0.3" y="2.1" width="14" height="2.2" rx="0.4"/><path d="M1.2,5.3 H13.4 L12.5,17.3 H2.1 Z M3.7,6.9 L4.1,15.9 H5.3 L5.1,6.9 Z M6.6,6.9 V15.9 H8 V6.9 Z M9.5,6.9 L9.3,15.9 H10.5 L10.9,6.9 Z" fill-rule="evenodd"/></g></svg>
<svg style="left:210px;top:802.7499999999999px;" width="19" height="19" viewBox="0 0 19 19"><g fill="#3a3a3a"><rect x="7.2" y="0" width="4" height="5" rx="0.6" transform="rotate(22.5 9.2 9.2)"/><rect x="7.2" y="0" width="4" height="5" rx="0.6" transform="rotate(67.5 9.2 9.2)"/><rect x="7.2" y="0" width="4" height="5" rx="0.6" transform="rotate(112.5 9.2 9.2)"/><rect x="7.2" y="0" width="4" height="5" rx="0.6" transform="rotate(157.5 9.2 9.2)"/><rect x="7.2" y="0" width="4" height="5" rx="0.6" transform="rotate(202.5 9.2 9.2)"/><rect x="7.2" y="0" width="4" height="5" rx="0.6" transform="rotate(247.5 9.2 9.2)"/><rect x="7.2" y="0" width="4" height="5" rx="0.6" transform="rotate(292.5 9.2 9.2)"/><rect x="7.2" y="0" width="4" height="5" rx="0.6" transform="rotate(337.5 9.2 9.2)"/></g><circle cx="9.2" cy="9.2" r="5.6" fill="none" stroke="#3a3a3a" stroke-width="3.1"/></svg>
<div style="left:238px;top:840.42px;font-size:15.8px;line-height:15.8px;color:#f2f2f2;white-space:nowrap;width:150.10000000000002px;text-align:center;transform:scaleX(0.91);">F12</div>
<div style="left:388.1px;top:840.42px;font-size:15.8px;line-height:15.8px;color:#f2f2f2;white-space:nowrap;width:125.10000000000002px;text-align:center;transform:scaleX(0.91);">240</div>
<div style="left:513.2px;top:840.42px;font-size:15.8px;line-height:15.8px;color:#cfcfcf;white-space:nowrap;width:125.19999999999993px;text-align:center;transform:scaleX(0.91);">20</div>
<div style="left:638.4px;top:842.42px;font-size:15.8px;line-height:15.8px;color:#f2f2f2;white-space:nowrap;width:125.20000000000005px;text-align:center;transform:scaleX(0.91);">Office</div>
<div style="left:763.6px;top:842.42px;font-size:15.8px;line-height:15.8px;color:#f2f2f2;white-space:nowrap;width:125.10000000000002px;text-align:center;transform:scaleX(0.91);">X.0</div>
<div style="left:888.7px;top:842.42px;font-size:15.8px;line-height:15.8px;color:#f2f2f2;white-space:nowrap;width:125.19999999999993px;text-align:center;transform:scaleX(0.91);">X3.2</div>
<div style="left:1013.9px;top:842.42px;font-size:15.8px;line-height:15.8px;color:#f2f2f2;white-space:nowrap;width:125.10000000000002px;text-align:center;transform:scaleX(0.91);">Y0</div>
<div style="left:1139.0px;top:842.42px;font-size:15.8px;line-height:15.8px;color:#f2f2f2;white-space:nowrap;width:125.20000000000005px;text-align:center;transform:scaleX(0.91);">Y14</div>
<div style="left:1264.2px;top:840.42px;font-size:15.8px;line-height:15.8px;color:#cfcfcf;white-space:nowrap;width:125.09999999999991px;text-align:center;transform:scaleX(0.91);">96000</div>
<div style="left:1389.3px;top:840.42px;font-size:15.8px;line-height:15.8px;color:#f2f2f2;white-space:nowrap;width:125.20000000000005px;text-align:center;transform:scaleX(0.91);">60000</div>
<div style="left:1568.8px;top:841.4px;width:16.2px;height:15.4px;background:#ffffff;border:1px solid #b8b8b8;box-sizing:border-box;border-radius:1px;"></div>
<div style="left:1639.6px;top:840.42px;font-size:15.8px;line-height:15.8px;color:#cfcfcf;white-space:nowrap;width:125.40000000000009px;text-align:center;transform:scaleX(0.91);">384 kVA</div>
<svg style="left:134px;top:839.0px;" width="21" height="20" viewBox="0 0 21 20"><path d="M10.2,0.5 V19 M1,9.8 H19.5" stroke="#3a3a3a" stroke-width="3"/></svg>
<svg style="left:174px;top:840.0px;" width="15" height="18" viewBox="0 0 15 18"><g fill="#d8d8d8"><rect x="5.2" y="0.3" width="4.2" height="1.6" rx="0.5"/><rect x="0.3" y="2.1" width="14" height="2.2" rx="0.4"/><path d="M1.2,5.3 H13.4 L12.5,17.3 H2.1 Z M3.7,6.9 L4.1,15.9 H5.3 L5.1,6.9 Z M6.6,6.9 V15.9 H8 V6.9 Z M9.5,6.9 L9.3,15.9 H10.5 L10.9,6.9 Z" fill-rule="evenodd"/></g></svg>
<svg style="left:210px;top:840.3px;" width="19" height="19" viewBox="0 0 19 19"><g fill="#3a3a3a"><rect x="7.2" y="0" width="4" height="5" rx="0.6" transform="rotate(22.5 9.2 9.2)"/><rect x="7.2" y="0" width="4" height="5" rx="0.6" transform="rotate(67.5 9.2 9.2)"/><rect x="7.2" y="0" width="4" height="5" rx="0.6" transform="rotate(112.5 9.2 9.2)"/><rect x="7.2" y="0" width="4" height="5" rx="0.6" transform="rotate(157.5 9.2 9.2)"/><rect x="7.2" y="0" width="4" height="5" rx="0.6" transform="rotate(202.5 9.2 9.2)"/><rect x="7.2" y="0" width="4" height="5" rx="0.6" transform="rotate(247.5 9.2 9.2)"/><rect x="7.2" y="0" width="4" height="5" rx="0.6" transform="rotate(292.5 9.2 9.2)"/><rect x="7.2" y="0" width="4" height="5" rx="0.6" transform="rotate(337.5 9.2 9.2)"/></g><circle cx="9.2" cy="9.2" r="5.6" fill="none" stroke="#3a3a3a" stroke-width="3.1"/></svg>
<div style="left:238px;top:877.97px;font-size:15.8px;line-height:15.8px;color:#f2f2f2;white-space:nowrap;width:150.10000000000002px;text-align:center;transform:scaleX(0.91);">F13</div>
<div style="left:388.1px;top:877.97px;font-size:15.8px;line-height:15.8px;color:#f2f2f2;white-space:nowrap;width:125.10000000000002px;text-align:center;transform:scaleX(0.91);">260</div>
<div style="left:513.2px;top:877.97px;font-size:15.8px;line-height:15.8px;color:#cfcfcf;white-space:nowrap;width:125.19999999999993px;text-align:center;transform:scaleX(0.91);">0</div>
<div style="left:638.4px;top:879.97px;font-size:15.8px;line-height:15.8px;color:#f2f2f2;white-space:nowrap;width:125.20000000000005px;text-align:center;transform:scaleX(0.91);">Office</div>
<div style="left:763.6px;top:879.97px;font-size:15.8px;line-height:15.8px;color:#f2f2f2;white-space:nowrap;width:125.10000000000002px;text-align:center;transform:scaleX(0.91);">X.0</div>
<div style="left:888.7px;top:879.97px;font-size:15.8px;line-height:15.8px;color:#f2f2f2;white-space:nowrap;width:125.19999999999993px;text-align:center;transform:scaleX(0.91);">X3.2</div>
<div style="left:1013.9px;top:879.97px;font-size:15.8px;line-height:15.8px;color:#f2f2f2;white-space:nowrap;width:125.10000000000002px;text-align:center;transform:scaleX(0.91);">Y0</div>
<div style="left:1139.0px;top:879.97px;font-size:15.8px;line-height:15.8px;color:#f2f2f2;white-space:nowrap;width:125.20000000000005px;text-align:center;transform:scaleX(0.91);">Y14</div>
<div style="left:1264.2px;top:877.97px;font-size:15.8px;line-height:15.8px;color:#cfcfcf;white-space:nowrap;width:125.09999999999991px;text-align:center;transform:scaleX(0.91);">96000</div>
<div style="left:1389.3px;top:877.97px;font-size:15.8px;line-height:15.8px;color:#f2f2f2;white-space:nowrap;width:125.20000000000005px;text-align:center;transform:scaleX(0.91);">60000</div>
<div style="left:1568.8px;top:878.9499999999999px;width:16.2px;height:15.4px;background:#ffffff;border:1px solid #b8b8b8;box-sizing:border-box;border-radius:1px;"></div>
<div style="left:1639.6px;top:877.97px;font-size:15.8px;line-height:15.8px;color:#cfcfcf;white-space:nowrap;width:125.40000000000009px;text-align:center;transform:scaleX(0.91);">384 kVA</div>
<svg style="left:134px;top:876.55px;" width="21" height="20" viewBox="0 0 21 20"><path d="M10.2,0.5 V19 M1,9.8 H19.5" stroke="#3a3a3a" stroke-width="3"/></svg>
<svg style="left:174px;top:877.55px;" width="15" height="18" viewBox="0 0 15 18"><g fill="#3a3a3a"><rect x="5.2" y="0.3" width="4.2" height="1.6" rx="0.5"/><rect x="0.3" y="2.1" width="14" height="2.2" rx="0.4"/><path d="M1.2,5.3 H13.4 L12.5,17.3 H2.1 Z M3.7,6.9 L4.1,15.9 H5.3 L5.1,6.9 Z M6.6,6.9 V15.9 H8 V6.9 Z M9.5,6.9 L9.3,15.9 H10.5 L10.9,6.9 Z" fill-rule="evenodd"/></g></svg>
<svg style="left:210px;top:877.8499999999999px;" width="19" height="19" viewBox="0 0 19 19"><g fill="#3a3a3a"><rect x="7.2" y="0" width="4" height="5" rx="0.6" transform="rotate(22.5 9.2 9.2)"/><rect x="7.2" y="0" width="4" height="5" rx="0.6" transform="rotate(67.5 9.2 9.2)"/><rect x="7.2" y="0" width="4" height="5" rx="0.6" transform="rotate(112.5 9.2 9.2)"/><rect x="7.2" y="0" width="4" height="5" rx="0.6" transform="rotate(157.5 9.2 9.2)"/><rect x="7.2" y="0" width="4" height="5" rx="0.6" transform="rotate(202.5 9.2 9.2)"/><rect x="7.2" y="0" width="4" height="5" rx="0.6" transform="rotate(247.5 9.2 9.2)"/><rect x="7.2" y="0" width="4" height="5" rx="0.6" transform="rotate(292.5 9.2 9.2)"/><rect x="7.2" y="0" width="4" height="5" rx="0.6" transform="rotate(337.5 9.2 9.2)"/></g><circle cx="9.2" cy="9.2" r="5.6" fill="none" stroke="#3a3a3a" stroke-width="3.1"/></svg>
<div style="left:238px;top:915.52px;font-size:15.8px;line-height:15.8px;color:#f2f2f2;white-space:nowrap;width:150.10000000000002px;text-align:center;transform:scaleX(0.91);">F-SC</div>
<div style="left:388.1px;top:915.52px;font-size:15.8px;line-height:15.8px;color:#f2f2f2;white-space:nowrap;width:125.10000000000002px;text-align:center;transform:scaleX(0.91);">-30</div>
<div style="left:513.2px;top:915.52px;font-size:15.8px;line-height:15.8px;color:#cfcfcf;white-space:nowrap;width:125.19999999999993px;text-align:center;transform:scaleX(0.91);">30</div>
<div style="left:638.4px;top:917.52px;font-size:15.8px;line-height:15.8px;color:#f2f2f2;white-space:nowrap;width:125.20000000000005px;text-align:center;transform:scaleX(0.91);">MER</div>
<div style="left:763.6px;top:917.52px;font-size:15.8px;line-height:15.8px;color:#f2f2f2;white-space:nowrap;width:125.10000000000002px;text-align:center;transform:scaleX(0.91);">X.0</div>
<div style="left:888.7px;top:917.52px;font-size:15.8px;line-height:15.8px;color:#f2f2f2;white-space:nowrap;width:125.19999999999993px;text-align:center;transform:scaleX(0.91);">X3.2</div>
<div style="left:1013.9px;top:917.52px;font-size:15.8px;line-height:15.8px;color:#f2f2f2;white-space:nowrap;width:125.10000000000002px;text-align:center;transform:scaleX(0.91);">Y0</div>
<div style="left:1139.0px;top:917.52px;font-size:15.8px;line-height:15.8px;color:#f2f2f2;white-space:nowrap;width:125.20000000000005px;text-align:center;transform:scaleX(0.91);">Y14</div>
<div style="left:1264.2px;top:915.52px;font-size:15.8px;line-height:15.8px;color:#cfcfcf;white-space:nowrap;width:125.09999999999991px;text-align:center;transform:scaleX(0.91);">96000</div>
<div style="left:1389.3px;top:915.52px;font-size:15.8px;line-height:15.8px;color:#f2f2f2;white-space:nowrap;width:125.20000000000005px;text-align:center;transform:scaleX(0.91);">0</div>
<div style="left:1568.8px;top:916.4999999999999px;width:16.2px;height:15.4px;background:#ffffff;border:1px solid #b8b8b8;box-sizing:border-box;border-radius:1px;"></div>
<div style="left:1639.6px;top:915.52px;font-size:15.8px;line-height:15.8px;color:#cfcfcf;white-space:nowrap;width:125.40000000000009px;text-align:center;transform:scaleX(0.91);">240 kVA</div>
<svg style="left:134px;top:914.0999999999999px;" width="21" height="20" viewBox="0 0 21 20"><path d="M10.2,0.5 V19 M1,9.8 H19.5" stroke="#3a3a3a" stroke-width="3"/></svg>
<svg style="left:174px;top:915.0999999999999px;" width="15" height="18" viewBox="0 0 15 18"><g fill="#d8d8d8"><rect x="5.2" y="0.3" width="4.2" height="1.6" rx="0.5"/><rect x="0.3" y="2.1" width="14" height="2.2" rx="0.4"/><path d="M1.2,5.3 H13.4 L12.5,17.3 H2.1 Z M3.7,6.9 L4.1,15.9 H5.3 L5.1,6.9 Z M6.6,6.9 V15.9 H8 V6.9 Z M9.5,6.9 L9.3,15.9 H10.5 L10.9,6.9 Z" fill-rule="evenodd"/></g></svg>
<svg style="left:210px;top:915.3999999999999px;" width="19" height="19" viewBox="0 0 19 19"><g fill="#3a3a3a"><rect x="7.2" y="0" width="4" height="5" rx="0.6" transform="rotate(22.5 9.2 9.2)"/><rect x="7.2" y="0" width="4" height="5" rx="0.6" transform="rotate(67.5 9.2 9.2)"/><rect x="7.2" y="0" width="4" height="5" rx="0.6" transform="rotate(112.5 9.2 9.2)"/><rect x="7.2" y="0" width="4" height="5" rx="0.6" transform="rotate(157.5 9.2 9.2)"/><rect x="7.2" y="0" width="4" height="5" rx="0.6" transform="rotate(202.5 9.2 9.2)"/><rect x="7.2" y="0" width="4" height="5" rx="0.6" transform="rotate(247.5 9.2 9.2)"/><rect x="7.2" y="0" width="4" height="5" rx="0.6" transform="rotate(292.5 9.2 9.2)"/><rect x="7.2" y="0" width="4" height="5" rx="0.6" transform="rotate(337.5 9.2 9.2)"/></g><circle cx="9.2" cy="9.2" r="5.6" fill="none" stroke="#3a3a3a" stroke-width="3.1"/></svg>
<svg style="left:0px;top:0px;" width="1800" height="960" viewBox="0 0 1800 960"><rect x="238" y="379.8" width="1527" height="1.5" fill="#57fbf1"/><rect x="238" y="941.6" width="1527" height="1.6" fill="#57fbf1"/><rect x="238" y="415.90" width="1527" height="3.1" fill="#57fbf1"/><rect x="238" y="453.45" width="1527" height="3.1" fill="#57fbf1"/><rect x="238" y="491.00" width="1527" height="3.1" fill="#57fbf1"/><rect x="238" y="528.55" width="1527" height="3.1" fill="#57fbf1"/><rect x="238" y="566.10" width="1527" height="3.1" fill="#57fbf1"/><rect x="238" y="603.65" width="1527" height="3.1" fill="#57fbf1"/><rect x="238" y="641.20" width="1527" height="3.1" fill="#57fbf1"/><rect x="238" y="678.75" width="1527" height="3.1" fill="#57fbf1"/><rect x="238" y="716.30" width="1527" height="3.1" fill="#57fbf1"/><rect x="238" y="753.85" width="1527" height="3.1" fill="#57fbf1"/><rect x="238" y="791.40" width="1527" height="3.1" fill="#57fbf1"/><rect x="238" y="828.95" width="1527" height="3.1" fill="#57fbf1"/><rect x="238" y="866.50" width="1527" height="3.1" fill="#57fbf1"/><rect x="238" y="904.05" width="1527" height="3.1" fill="#57fbf1"/><rect x="238" y="379.8" width="1.5" height="563.4" fill="#57fbf1"/><rect x="1763" y="379.8" width="2" height="563.4" fill="#57fbf1"/><rect x="386.55" y="379.8" width="3.1" height="563.4" fill="#57fbf1"/><rect x="511.70" y="379.8" width="3.1" height="563.4" fill="#57fbf1"/><rect x="636.85" y="379.8" width="3.1" height="563.4" fill="#57fbf1"/><rect x="762.00" y="379.8" width="3.1" height="563.4" fill="#57fbf1"/><rect x="887.15" y="379.8" width="3.1" height="563.4" fill="#57fbf1"/><rect x="1012.30" y="379.8" width="3.1" height="563.4" fill="#57fbf1"/><rect x="1137.45" y="379.8" width="3.1" height="563.4" fill="#57fbf1"/><rect x="1262.60" y="379.8" width="3.1" height="563.4" fill="#57fbf1"/><rect x="1387.75" y="379.8" width="3.1" height="563.4" fill="#57fbf1"/><rect x="1512.90" y="379.8" width="3.1" height="563.4" fill="#57fbf1"/><rect x="1638.05" y="379.8" width="3.1" height="563.4" fill="#57fbf1"/></svg>
<svg style="left:10px;top:1279px;" width="20" height="16" viewBox="0 0 20 16"><path d="M2.5,8 L7.5,13 L16.5,2.5" fill="none" stroke="#0a9a1a" stroke-width="2.6"/></svg>
<div style="left:44.0px;top:1280.51px;font-size:15.7px;line-height:15.7px;color:#e4e4e4;white-space:nowrap;transform:scaleX(0.7950);transform-origin:0 0;">READY</div>
<svg style="left:1700px;top:1279px;" width="16" height="17" viewBox="0 0 16 17"><rect x="2.3" y="1.5" width="1.9" height="14" fill="#d05555"/><path d="M4.2,2.5 Q7,1.5 9,2.5 Q11,3.5 13.5,2.5 V8.5 Q11,9.5 9,8.5 Q7,7.5 4.2,8.5 Z" fill="#d05555"/></svg>
<svg style="left:1732.7px;top:1275px;" width="24" height="24" viewBox="0 0 24 24"><circle cx="12" cy="12.3" r="11.4" fill="#00f090"/><path d="M11.3,6.2 H16.3 L13.5,11 H16.5 L8.3,19 L10.6,13 H7.6 Z" fill="#333"/></svg>
<svg style="left:1757.8px;top:1275px;" width="24" height="24" viewBox="0 0 24 24"><circle cx="12" cy="12.3" r="11.4" fill="#a3a3a3"/><path d="M11.3,6.2 H16.3 L13.5,11 H16.5 L8.3,19 L10.6,13 H7.6 Z" fill="#333"/></svg>
<svg style="left:1782.9px;top:1275px;" width="24" height="24" viewBox="0 0 24 24"><circle cx="12" cy="12.3" r="11.4" fill="#a3a3a3"/><path d="M11.3,6.2 H16.3 L13.5,11 H16.5 L8.3,19 L10.6,13 H7.6 Z" fill="#333"/><path d="M6.6,6.8 L17.8,17.4" stroke="#333" stroke-width="1.4"/></svg>
<svg style="left:1824px;top:1275px;" width="23" height="24" viewBox="0 0 23 24"><g fill="none" stroke="#e6e6e6" stroke-width="2.6"><path d="M4,10 Q5.5,4.5 11.5,4.5 Q16,4.5 18.5,8.5"/><path d="M19,14 Q17.5,19.5 11.5,19.5 Q7,19.5 4.5,15.5"/></g><path d="M20.5,2.5 V10.5 H13.5 Z" fill="#e6e6e6"/><path d="M2.5,21.5 V13.5 H9.5 Z" fill="#e6e6e6"/></svg>
<div style="left:1862px;top:1281.48px;font-size:14.2px;line-height:14.2px;color:#c8c8c8;white-space:nowrap;">Version:</div>
<div style="left:1920.5px;top:1282.07px;font-size:13.5px;line-height:13.5px;color:#c8c8c8;white-space:nowrap;">1.0.0.35</div>
</body></html>
